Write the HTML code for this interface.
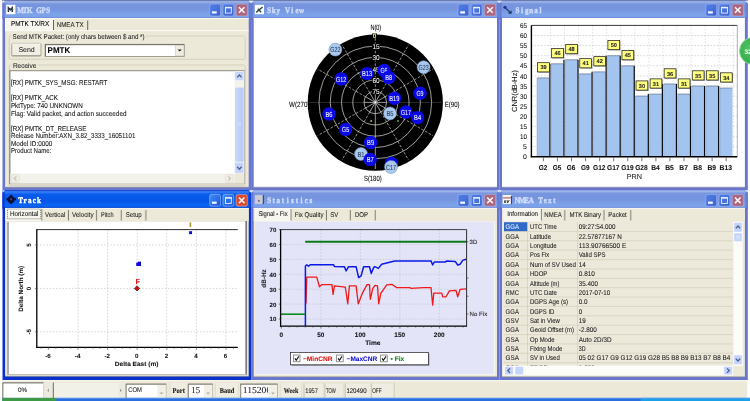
<!DOCTYPE html>
<html lang="en"><head><meta charset="utf-8"><title>GPS Tool</title>
<style>
html,body{margin:0;padding:0;background:#fff;}
body{width:750px;height:401px;overflow:hidden;font-family:"Liberation Sans",sans-serif;}
svg text{white-space:pre;}
</style></head><body>
<svg width="750" height="401" viewBox="0 0 750 401" style="display:block" text-rendering="geometricPrecision"><defs>
<linearGradient id="ti" x1="0" y1="0" x2="0" y2="1">
<stop offset="0" stop-color="#8ea6e0"/><stop offset="0.07" stop-color="#9db4e6"/><stop offset="0.18" stop-color="#7895df"/><stop offset="0.5" stop-color="#7694df"/><stop offset="0.8" stop-color="#7ca3ea"/><stop offset="0.94" stop-color="#7ba0e8"/><stop offset="1" stop-color="#6c82d2"/>
</linearGradient>
<linearGradient id="ta" x1="0" y1="0" x2="0" y2="1">
<stop offset="0" stop-color="#0a3cc8"/><stop offset="0.09" stop-color="#3d83fa"/><stop offset="0.22" stop-color="#0a5cec"/><stop offset="0.6" stop-color="#0556e6"/><stop offset="0.85" stop-color="#0a64f4"/><stop offset="0.95" stop-color="#0a5cec"/><stop offset="1" stop-color="#0030b8"/>
</linearGradient>
<linearGradient id="bi" x1="0" y1="0" x2="1" y2="1">
<stop offset="0" stop-color="#5580e6"/><stop offset="1" stop-color="#3a62d2"/>
</linearGradient>
<linearGradient id="ba" x1="0" y1="0" x2="1" y2="1">
<stop offset="0" stop-color="#3f8cf8"/><stop offset="1" stop-color="#1a55d8"/>
</linearGradient>
<linearGradient id="sbv" x1="0" y1="0" x2="1" y2="0">
<stop offset="0" stop-color="#c9d7fc"/><stop offset="1" stop-color="#b4c8f8"/>
</linearGradient>
<radialGradient id="grn" cx="0.4" cy="0.4" r="0.7">
<stop offset="0" stop-color="#52c462"/><stop offset="1" stop-color="#2fa548"/>
</radialGradient>
</defs><filter id="soft" x="0" y="0" width="750" height="401" filterUnits="userSpaceOnUse" color-interpolation-filters="sRGB"><feGaussianBlur stdDeviation="0.34"/></filter><rect x="0" y="0" width="750" height="401" fill="#fff"/><g filter="url(#soft)"><rect x="0.00" y="0.00" width="750.00" height="401.00" fill="#ffffff" />
<rect x="2.20" y="0.00" width="745.60" height="1.20" fill="#5f709c" />
<rect x="2.50" y="0.80" width="248.60" height="189.40" fill="#6876d0" />
<rect x="2.50" y="0.80" width="248.60" height="17.20" fill="url(#ti)" />
<rect x="2.50" y="2.40" width="2.20" height="17.20" fill="#6272cc" opacity="0.75"/>
<rect x="248.90" y="2.40" width="2.20" height="17.20" fill="#6272cc" opacity="0.75"/>
<rect x="5.10" y="18.00" width="243.60" height="169.50" fill="#ece9d8" />
<line x1="5.10" y1="18.50" x2="248.70" y2="18.50" stroke="#fbfaf6" stroke-width="0.9" />
<line x1="5.10" y1="187.30" x2="248.70" y2="187.30" stroke="#5d6188" stroke-width="0.6" />
<text x="24.40 29.93 35.45 40.98 46.50 52.02 57.55" y="13.20" transform="scale(0.84 1)" font-family='"Liberation Serif", serif' font-size="8.4" font-weight="bold" fill="#d6e3fb" stroke="#d6e3fb" stroke-width="0.4" text-anchor="middle" opacity="0.92">MTK GPS</text>
<path d="M2.50 0.80 h2.4 l-2.4 2.6 Z" fill="#f6f6fa" opacity="0.95"/>
<path d="M251.10 0.80 h-2.4 l2.4 2.6 Z" fill="#f6f6fa" opacity="0.95"/>
<rect x="236.10" y="4.10" width="11.20" height="11.80" fill="#ad6680" stroke="#c9d6f6" stroke-width="0.5" rx="1.6" stroke-opacity="0.7"/>
<path d="M238.90 7.20 L244.50 12.80 M244.50 7.20 L238.90 12.80" stroke="#fff" stroke-width="1.5" fill="none" opacity="0.95"/>
<rect x="222.90" y="4.10" width="10.80" height="11.80" fill="url(#bi)" stroke="#c9d6f6" stroke-width="0.5" rx="1.6" stroke-opacity="0.7"/>
<rect x="225.50" y="7.30" width="5.80" height="5.80" fill="none" stroke="#eaf1ff" stroke-width="0.9" />
<line x1="225.10" y1="7.70" x2="231.70" y2="7.70" stroke="#eaf1ff" stroke-width="1.3" />
<rect x="209.70" y="4.10" width="10.80" height="11.80" fill="url(#bi)" stroke="#c9d6f6" stroke-width="0.5" rx="1.6" stroke-opacity="0.7"/>
<rect x="211.90" y="11.30" width="4.80" height="2.20" fill="#f4f8ff" />
<rect x="6.20" y="4.80" width="9.20" height="9.40" fill="#ffffff" />
<path d="M8.40 12.00 V7.80 L10.40 9.80 L12.20 7.80 V12.00" stroke="#2b3448" stroke-width="1.5" fill="none"/>
<rect x="12.80" y="8.60" width="1.60" height="1.60" fill="#c8d86a" />
<rect x="5.50" y="19.20" width="48.40" height="12.00" fill="#f7f6ef" />
<line x1="5.50" y1="19.40" x2="5.50" y2="31.00" stroke="#ffffff" stroke-width="1" />
<text x="10.90" y="26.46" font-family='"Liberation Sans", sans-serif' font-size="7.1" fill="#000" textLength="38.40" lengthAdjust="spacingAndGlyphs" stroke="#000" stroke-width="0.07" >PMTK TX/RX</text>
<line x1="53.50" y1="20.00" x2="53.50" y2="30.00" stroke="#55524a" stroke-width="0.9" />
<text x="56.80" y="26.96" font-family='"Liberation Sans", sans-serif' font-size="7.1" fill="#222" textLength="26.80" lengthAdjust="spacingAndGlyphs" stroke="#222" stroke-width="0.07" >NMEA TX</text>
<line x1="87.70" y1="20.60" x2="87.70" y2="30.00" stroke="#55524a" stroke-width="0.9" />
<line x1="5.10" y1="30.60" x2="248.70" y2="30.60" stroke="#fbfaf4" stroke-width="1" />
<rect x="9.20" y="36.00" width="236.10" height="23.30" fill="none" stroke="#cfcbb6" stroke-width="0.8" rx="1.5" />
<rect x="11.80" y="33.00" width="134.00" height="6.00" fill="#ece9d8" />
<text x="12.60" y="38.52" font-family='"Liberation Sans", sans-serif' font-size="7.0" fill="#1c1c1c" textLength="132.00" lengthAdjust="spacingAndGlyphs" stroke="#1c1c1c" stroke-width="0.07" >Send MTK Packet: (only chars between $ and *)</text>
<rect x="11.70" y="43.40" width="29.30" height="12.60" fill="#f1efe4" stroke="#8a8778" stroke-width="0.7" rx="1" />
<line x1="12.20" y1="43.90" x2="40.60" y2="43.90" stroke="#ffffff" stroke-width="0.8" />
<line x1="12.20" y1="55.60" x2="40.90" y2="55.60" stroke="#9c998a" stroke-width="0.8" />
<text x="26.60" y="52.12" font-family='"Liberation Sans", sans-serif' font-size="7.0" fill="#222" text-anchor="middle" stroke="#222" stroke-width="0.07" >Send</text>
<rect x="45.10" y="44.30" width="139.20" height="12.20" fill="#ffffff" stroke="#8d8a7c" stroke-width="0.8" />
<line x1="45.40" y1="44.70" x2="184.00" y2="44.70" stroke="#5c5a52" stroke-width="0.8" />
<line x1="45.50" y1="44.60" x2="45.50" y2="56.20" stroke="#5c5a52" stroke-width="0.8" />
<text x="47.60" y="53.22" font-family='"Liberation Sans", sans-serif' font-size="8.4" fill="#000" font-weight="bold" textLength="22.60" lengthAdjust="spacingAndGlyphs" stroke="#000" stroke-width="0.07" >PMTK</text>
<rect x="175.20" y="45.40" width="8.60" height="10.40" fill="#efede2" stroke="#c9c6b6" stroke-width="0.5" />
<path d="M177.6 49.4 H181.8 L179.7 51.6 Z" fill="#111"/>
<rect x="9.20" y="65.00" width="236.10" height="120.60" fill="none" stroke="#cfcbb6" stroke-width="0.8" rx="1.5" />
<rect x="11.80" y="62.00" width="26.00" height="6.00" fill="#ece9d8" />
<text x="12.90" y="67.52" font-family='"Liberation Sans", sans-serif' font-size="7.0" fill="#1c1c1c" textLength="23.40" lengthAdjust="spacingAndGlyphs" stroke="#1c1c1c" stroke-width="0.07" >Receive</text>
<rect x="9.60" y="70.40" width="234.60" height="113.40" fill="#ffffff" stroke="#a5a294" stroke-width="0.8" />
<line x1="9.60" y1="70.80" x2="244.00" y2="70.80" stroke="#8a877c" stroke-width="0.7" />
<line x1="10.00" y1="70.60" x2="10.00" y2="183.60" stroke="#77746a" stroke-width="0.8" />
<text x="10.90" y="85.16" font-family='"Liberation Sans", sans-serif' font-size="7.1" fill="#111" textLength="96.50" lengthAdjust="spacingAndGlyphs" stroke="#111" stroke-width="0.07" >[RX] PMTK_SYS_MSG: RESTART</text>
<text x="10.90" y="100.34" font-family='"Liberation Sans", sans-serif' font-size="7.1" fill="#111" textLength="47.00" lengthAdjust="spacingAndGlyphs" stroke="#111" stroke-width="0.07" >[RX] PMTK_ACK</text>
<text x="10.90" y="107.93" font-family='"Liberation Sans", sans-serif' font-size="7.1" fill="#111" textLength="72.00" lengthAdjust="spacingAndGlyphs" stroke="#111" stroke-width="0.07" >PktType: 740 UNKNOWN</text>
<text x="10.90" y="115.52" font-family='"Liberation Sans", sans-serif' font-size="7.1" fill="#111" textLength="115.60" lengthAdjust="spacingAndGlyphs" stroke="#111" stroke-width="0.07" >Flag: Valid packet, and action succeeded</text>
<text x="10.90" y="130.70" font-family='"Liberation Sans", sans-serif' font-size="7.1" fill="#111" textLength="75.50" lengthAdjust="spacingAndGlyphs" stroke="#111" stroke-width="0.07" >[RX] PMTK_DT_RELEASE</text>
<text x="10.90" y="138.29" font-family='"Liberation Sans", sans-serif' font-size="7.1" fill="#111" textLength="124.50" lengthAdjust="spacingAndGlyphs" stroke="#111" stroke-width="0.07" >Release Number:AXN_3.82_3333_16051101</text>
<text x="10.90" y="145.88" font-family='"Liberation Sans", sans-serif' font-size="7.1" fill="#111" textLength="41.50" lengthAdjust="spacingAndGlyphs" stroke="#111" stroke-width="0.07" >Model ID:0000</text>
<text x="10.90" y="153.47" font-family='"Liberation Sans", sans-serif' font-size="7.1" fill="#111" textLength="40.50" lengthAdjust="spacingAndGlyphs" stroke="#111" stroke-width="0.07" >Product Name:</text>
<rect x="234.50" y="71.20" width="9.40" height="102.60" fill="#f4f3ec" />
<rect x="234.90" y="71.40" width="8.80" height="9.00" fill="#c6d5fd" stroke="#fff" stroke-width="0.4" rx="1" />
<path d="M237.2 77.4 L239.4 75 L241.6 77.4" stroke="#4d6185" stroke-width="1.3" fill="none"/>
<rect x="235.00" y="87.60" width="8.60" height="74.20" fill="url(#sbv)" rx="1" />
<line x1="237.40" y1="123.00" x2="241.40" y2="123.00" stroke="#e8eeff" stroke-width="0.6" />
<line x1="237.40" y1="125.00" x2="241.40" y2="125.00" stroke="#e8eeff" stroke-width="0.6" />
<rect x="234.90" y="162.40" width="8.80" height="10.80" fill="#c2d2fc" stroke="#fff" stroke-width="0.4" rx="1" />
<path d="M237.2 166.8 L239.4 169.2 L241.6 166.8" stroke="#4d6185" stroke-width="1.3" fill="none"/>
<rect x="10.40" y="173.60" width="224.00" height="9.80" fill="#f3f2ea" />
<rect x="234.40" y="173.60" width="9.60" height="9.80" fill="#ece9d8" />
<rect x="11.60" y="174.40" width="7.60" height="8.40" fill="#f0eee4" stroke="#dad7c8" stroke-width="0.5" rx="1" />
<path d="M16.4 176.4 L14.2 178.6 L16.4 180.8" stroke="#c4c1b2" stroke-width="1.1" fill="none"/>
<rect x="225.40" y="174.40" width="7.60" height="8.40" fill="#f0eee4" stroke="#dad7c8" stroke-width="0.5" rx="1" />
<path d="M228.2 176.4 L230.4 178.6 L228.2 180.8" stroke="#c4c1b2" stroke-width="1.1" fill="none"/>
<rect x="251.10" y="0.80" width="248.30" height="189.40" fill="#6876d0" />
<rect x="251.10" y="0.80" width="248.30" height="17.20" fill="url(#ti)" />
<rect x="251.10" y="2.40" width="2.20" height="17.20" fill="#6272cc" opacity="0.75"/>
<rect x="497.20" y="2.40" width="2.20" height="17.20" fill="#6272cc" opacity="0.75"/>
<rect x="253.70" y="18.00" width="243.30" height="169.50" fill="#ffffff" />
<line x1="253.70" y1="18.50" x2="497.00" y2="18.50" stroke="#fbfaf6" stroke-width="0.9" />
<line x1="253.70" y1="187.30" x2="497.00" y2="187.30" stroke="#5d6188" stroke-width="0.6" />
<text x="320.36 325.88 331.40 336.93 342.45 347.98 353.50 359.02" y="13.20" transform="scale(0.84 1)" font-family='"Liberation Serif", serif' font-size="8.4" font-weight="bold" fill="#d6e3fb" stroke="#d6e3fb" stroke-width="0.4" text-anchor="middle" opacity="0.92">Sky View</text>
<path d="M251.10 0.80 h2.4 l-2.4 2.6 Z" fill="#f6f6fa" opacity="0.95"/>
<path d="M499.40 0.80 h-2.4 l2.4 2.6 Z" fill="#f6f6fa" opacity="0.95"/>
<rect x="484.40" y="4.10" width="11.20" height="11.80" fill="#ad6680" stroke="#c9d6f6" stroke-width="0.5" rx="1.6" stroke-opacity="0.7"/>
<path d="M487.20 7.20 L492.80 12.80 M492.80 7.20 L487.20 12.80" stroke="#fff" stroke-width="1.5" fill="none" opacity="0.95"/>
<rect x="471.20" y="4.10" width="10.80" height="11.80" fill="url(#bi)" stroke="#c9d6f6" stroke-width="0.5" rx="1.6" stroke-opacity="0.7"/>
<rect x="473.80" y="7.30" width="5.80" height="5.80" fill="none" stroke="#eaf1ff" stroke-width="0.9" />
<line x1="473.40" y1="7.70" x2="480.00" y2="7.70" stroke="#eaf1ff" stroke-width="1.3" />
<rect x="458.00" y="4.10" width="10.80" height="11.80" fill="url(#bi)" stroke="#c9d6f6" stroke-width="0.5" rx="1.6" stroke-opacity="0.7"/>
<rect x="460.20" y="11.30" width="4.80" height="2.20" fill="#f4f8ff" />
<rect x="254.80" y="4.80" width="9.20" height="9.40" fill="#ffffff" />
<path d="M256.20 12.40 L262.60 7.00 M257.80 8.80 L261.20 12.20" stroke="#2e4a3c" stroke-width="1.4" fill="none"/>
<ellipse cx="375.3" cy="102.60000000000001" rx="67.6" ry="68.1" fill="#000"/>
<circle cx="375.3" cy="102.4" r="56.33" fill="none" stroke="#e8e8e0" stroke-width="0.75" stroke-opacity="0.9"/>
<circle cx="375.3" cy="102.4" r="45.07" fill="none" stroke="#e8e8e0" stroke-width="0.75" stroke-opacity="0.9"/>
<circle cx="375.3" cy="102.4" r="33.80" fill="none" stroke="#e8e8e0" stroke-width="0.75" stroke-opacity="0.9"/>
<circle cx="375.3" cy="102.4" r="22.53" fill="none" stroke="#e8e8e0" stroke-width="0.75" stroke-opacity="0.9"/>
<circle cx="375.3" cy="102.4" r="11.27" fill="none" stroke="#e8e8e0" stroke-width="0.75" stroke-opacity="0.9"/>
<line x1="375.30" y1="91.13" x2="375.30" y2="35.80" stroke="#e6e6de" stroke-width="0.7" stroke-dasharray="2.6 1.6" stroke-opacity="0.9"/>
<line x1="375.30" y1="102.40" x2="375.30" y2="91.13" stroke="#ffffff" stroke-width="0.6" />
<line x1="380.93" y1="92.64" x2="408.60" y2="44.72" stroke="#e6e6de" stroke-width="0.7" stroke-dasharray="2.6 1.6" stroke-opacity="0.9"/>
<line x1="375.30" y1="102.40" x2="380.93" y2="92.64" stroke="#ffffff" stroke-width="0.6" />
<line x1="385.06" y1="96.77" x2="432.98" y2="69.10" stroke="#e6e6de" stroke-width="0.7" stroke-dasharray="2.6 1.6" stroke-opacity="0.9"/>
<line x1="375.30" y1="102.40" x2="385.06" y2="96.77" stroke="#ffffff" stroke-width="0.6" />
<line x1="386.57" y1="102.40" x2="441.90" y2="102.40" stroke="#d6d6cc" stroke-width="0.5" stroke-opacity="0.4"/>
<line x1="375.30" y1="102.40" x2="386.57" y2="102.40" stroke="#ffffff" stroke-width="0.6" />
<line x1="385.06" y1="108.03" x2="432.98" y2="135.70" stroke="#e6e6de" stroke-width="0.7" stroke-dasharray="2.6 1.6" stroke-opacity="0.9"/>
<line x1="375.30" y1="102.40" x2="385.06" y2="108.03" stroke="#ffffff" stroke-width="0.6" />
<line x1="380.93" y1="112.16" x2="408.60" y2="160.08" stroke="#e6e6de" stroke-width="0.7" stroke-dasharray="2.6 1.6" stroke-opacity="0.9"/>
<line x1="375.30" y1="102.40" x2="380.93" y2="112.16" stroke="#ffffff" stroke-width="0.6" />
<line x1="375.30" y1="113.67" x2="375.30" y2="169.00" stroke="#f0f0ea" stroke-width="0.7" stroke-opacity="0.9"/>
<line x1="375.30" y1="102.40" x2="375.30" y2="113.67" stroke="#ffffff" stroke-width="0.6" />
<line x1="369.67" y1="112.16" x2="342.00" y2="160.08" stroke="#e6e6de" stroke-width="0.7" stroke-dasharray="2.6 1.6" stroke-opacity="0.9"/>
<line x1="375.30" y1="102.40" x2="369.67" y2="112.16" stroke="#ffffff" stroke-width="0.6" />
<line x1="365.54" y1="108.03" x2="317.62" y2="135.70" stroke="#e6e6de" stroke-width="0.7" stroke-dasharray="2.6 1.6" stroke-opacity="0.9"/>
<line x1="375.30" y1="102.40" x2="365.54" y2="108.03" stroke="#ffffff" stroke-width="0.6" />
<line x1="364.03" y1="102.40" x2="308.70" y2="102.40" stroke="#d6d6cc" stroke-width="0.5" stroke-opacity="0.4"/>
<line x1="375.30" y1="102.40" x2="364.03" y2="102.40" stroke="#ffffff" stroke-width="0.6" />
<line x1="365.54" y1="96.77" x2="317.62" y2="69.10" stroke="#e6e6de" stroke-width="0.7" stroke-dasharray="2.6 1.6" stroke-opacity="0.9"/>
<line x1="375.30" y1="102.40" x2="365.54" y2="96.77" stroke="#ffffff" stroke-width="0.6" />
<line x1="369.67" y1="92.64" x2="342.00" y2="44.72" stroke="#e6e6de" stroke-width="0.7" stroke-dasharray="2.6 1.6" stroke-opacity="0.9"/>
<line x1="375.30" y1="102.40" x2="369.67" y2="92.64" stroke="#ffffff" stroke-width="0.6" />
<rect x="372.30" y="33.40" width="4.60" height="4.40" fill="#000" />
<text x="374.50" y="37.90" font-family='"Liberation Sans", sans-serif' font-size="6.4" fill="#dde45a" text-anchor="middle" font-weight="bold" stroke="#dde45a" stroke-width="0.07" >0</text>
<rect x="371.90" y="43.57" width="8.20" height="5.80" fill="#000" />
<text x="376.10" y="48.99" font-family='"Liberation Sans", sans-serif' font-size="7.0" fill="#f4f4f4" text-anchor="middle" textLength="7.20" lengthAdjust="spacingAndGlyphs" stroke="#f4f4f4" stroke-width="0.07" >15</text>
<rect x="371.90" y="54.83" width="8.20" height="5.80" fill="#000" />
<text x="376.10" y="60.25" font-family='"Liberation Sans", sans-serif' font-size="7.0" fill="#f4f4f4" text-anchor="middle" textLength="7.20" lengthAdjust="spacingAndGlyphs" stroke="#f4f4f4" stroke-width="0.07" >30</text>
<rect x="371.90" y="66.10" width="8.20" height="5.80" fill="#000" />
<text x="376.10" y="71.52" font-family='"Liberation Sans", sans-serif' font-size="7.0" fill="#f4f4f4" text-anchor="middle" textLength="7.20" lengthAdjust="spacingAndGlyphs" stroke="#f4f4f4" stroke-width="0.07" >45</text>
<rect x="371.90" y="77.37" width="8.20" height="5.80" fill="#000" />
<text x="376.10" y="82.79" font-family='"Liberation Sans", sans-serif' font-size="7.0" fill="#f4f4f4" text-anchor="middle" textLength="7.20" lengthAdjust="spacingAndGlyphs" stroke="#f4f4f4" stroke-width="0.07" >60</text>
<rect x="371.90" y="88.63" width="8.20" height="5.80" fill="#000" />
<text x="376.10" y="94.05" font-family='"Liberation Sans", sans-serif' font-size="7.0" fill="#f4f4f4" text-anchor="middle" textLength="7.20" lengthAdjust="spacingAndGlyphs" stroke="#f4f4f4" stroke-width="0.07" >75</text>
<text x="375.80" y="29.54" font-family='"Liberation Sans", sans-serif' font-size="7.6" fill="#000" text-anchor="middle" textLength="10.80" lengthAdjust="spacingAndGlyphs" stroke="#000" stroke-width="0.07" >N(0)</text>
<text x="372.80" y="180.94" font-family='"Liberation Sans", sans-serif' font-size="7.6" fill="#000" text-anchor="middle" textLength="17.60" lengthAdjust="spacingAndGlyphs" stroke="#000" stroke-width="0.07" >S(180)</text>
<text x="289.00" y="106.74" font-family='"Liberation Sans", sans-serif' font-size="7.6" fill="#000" textLength="20.60" lengthAdjust="spacingAndGlyphs" stroke="#000" stroke-width="0.07" >W(270)</text>
<text x="444.80" y="106.74" font-family='"Liberation Sans", sans-serif' font-size="7.6" fill="#000" textLength="14.70" lengthAdjust="spacingAndGlyphs" stroke="#000" stroke-width="0.07" >E(90)</text>
<circle cx="371.2" cy="121" r="0.9" fill="#a8c040"/>
<circle cx="398" cy="121" r="0.9" fill="#58b848"/>
<circle cx="335.4" cy="49.6" r="6.5" fill="#a9c9ee" stroke="#6f8db8" stroke-width="0.5"/>
<text x="335.40" y="52.33" font-family='"Liberation Sans", sans-serif' font-size="7.3" fill="#2c3e5c" text-anchor="middle" textLength="10.20" lengthAdjust="spacingAndGlyphs" stroke="#2c3e5c" stroke-width="0.07" >G22</text>
<circle cx="423.6" cy="67.2" r="6.5" fill="#a9c9ee" stroke="#6f8db8" stroke-width="0.5"/>
<text x="423.60" y="69.93" font-family='"Liberation Sans", sans-serif' font-size="7.3" fill="#2c3e5c" text-anchor="middle" textLength="10.20" lengthAdjust="spacingAndGlyphs" stroke="#2c3e5c" stroke-width="0.07" >G23</text>
<circle cx="341.2" cy="79.0" r="6.7" fill="#0a0ae6"/>
<text x="341.20" y="81.73" font-family='"Liberation Sans", sans-serif' font-size="7.3" fill="#f4f6ff" text-anchor="middle" textLength="10.20" lengthAdjust="spacingAndGlyphs" stroke="#f4f6ff" stroke-width="0.07" >G12</text>
<circle cx="367.0" cy="73.6" r="6.7" fill="#0a0ae6"/>
<text x="367.00" y="76.33" font-family='"Liberation Sans", sans-serif' font-size="7.3" fill="#f4f6ff" text-anchor="middle" textLength="10.20" lengthAdjust="spacingAndGlyphs" stroke="#f4f6ff" stroke-width="0.07" >B13</text>
<circle cx="384.0" cy="70.4" r="6.7" fill="#0a0ae6"/>
<text x="384.00" y="73.13" font-family='"Liberation Sans", sans-serif' font-size="7.3" fill="#f4f6ff" text-anchor="middle" textLength="7.00" lengthAdjust="spacingAndGlyphs" stroke="#f4f6ff" stroke-width="0.07" >G6</text>
<circle cx="388.8" cy="77.4" r="6.7" fill="#0a0ae6"/>
<text x="388.80" y="80.13" font-family='"Liberation Sans", sans-serif' font-size="7.3" fill="#f4f6ff" text-anchor="middle" textLength="7.00" lengthAdjust="spacingAndGlyphs" stroke="#f4f6ff" stroke-width="0.07" >B8</text>
<circle cx="420.0" cy="93.2" r="6.7" fill="#0a0ae6"/>
<text x="420.00" y="95.93" font-family='"Liberation Sans", sans-serif' font-size="7.3" fill="#f4f6ff" text-anchor="middle" textLength="7.00" lengthAdjust="spacingAndGlyphs" stroke="#f4f6ff" stroke-width="0.07" >G9</text>
<circle cx="394.4" cy="98.2" r="6.7" fill="#0a0ae6"/>
<text x="394.40" y="100.93" font-family='"Liberation Sans", sans-serif' font-size="7.3" fill="#f4f6ff" text-anchor="middle" textLength="10.20" lengthAdjust="spacingAndGlyphs" stroke="#f4f6ff" stroke-width="0.07" >B19</text>
<circle cx="329.0" cy="114.0" r="6.7" fill="#0a0ae6"/>
<text x="329.00" y="116.73" font-family='"Liberation Sans", sans-serif' font-size="7.3" fill="#f4f6ff" text-anchor="middle" textLength="7.00" lengthAdjust="spacingAndGlyphs" stroke="#f4f6ff" stroke-width="0.07" >B6</text>
<circle cx="345.6" cy="129.4" r="6.7" fill="#0a0ae6"/>
<text x="345.60" y="132.13" font-family='"Liberation Sans", sans-serif' font-size="7.3" fill="#f4f6ff" text-anchor="middle" textLength="7.00" lengthAdjust="spacingAndGlyphs" stroke="#f4f6ff" stroke-width="0.07" >G5</text>
<circle cx="406.0" cy="112.0" r="6.7" fill="#0a0ae6"/>
<text x="406.00" y="114.73" font-family='"Liberation Sans", sans-serif' font-size="7.3" fill="#f4f6ff" text-anchor="middle" textLength="10.20" lengthAdjust="spacingAndGlyphs" stroke="#f4f6ff" stroke-width="0.07" >G17</text>
<circle cx="417.6" cy="117.6" r="6.7" fill="#0a0ae6"/>
<text x="417.60" y="120.33" font-family='"Liberation Sans", sans-serif' font-size="7.3" fill="#f4f6ff" text-anchor="middle" textLength="7.00" lengthAdjust="spacingAndGlyphs" stroke="#f4f6ff" stroke-width="0.07" >B4</text>
<circle cx="390.0" cy="113.4" r="6.5" fill="#a9c9ee" stroke="#6f8db8" stroke-width="0.5"/>
<text x="390.00" y="116.13" font-family='"Liberation Sans", sans-serif' font-size="7.3" fill="#2c3e5c" text-anchor="middle" textLength="7.00" lengthAdjust="spacingAndGlyphs" stroke="#2c3e5c" stroke-width="0.07" >B5</text>
<circle cx="370.6" cy="142.6" r="6.7" fill="#0a0ae6"/>
<text x="370.60" y="145.33" font-family='"Liberation Sans", sans-serif' font-size="7.3" fill="#f4f6ff" text-anchor="middle" textLength="7.00" lengthAdjust="spacingAndGlyphs" stroke="#f4f6ff" stroke-width="0.07" >B9</text>
<circle cx="361.0" cy="154.0" r="6.5" fill="#a9c9ee" stroke="#6f8db8" stroke-width="0.5"/>
<text x="361.00" y="156.73" font-family='"Liberation Sans", sans-serif' font-size="7.3" fill="#2c3e5c" text-anchor="middle" textLength="7.00" lengthAdjust="spacingAndGlyphs" stroke="#2c3e5c" stroke-width="0.07" >B1</text>
<circle cx="370.2" cy="159.4" r="6.7" fill="#0a0ae6"/>
<text x="370.20" y="162.13" font-family='"Liberation Sans", sans-serif' font-size="7.3" fill="#f4f6ff" text-anchor="middle" textLength="7.00" lengthAdjust="spacingAndGlyphs" stroke="#f4f6ff" stroke-width="0.07" >B7</text>
<circle cx="391.4" cy="163.4" r="6.7" fill="#0a0ae6"/>
<text x="391.40" y="166.13" font-family='"Liberation Sans", sans-serif' font-size="7.3" fill="#f4f6ff" text-anchor="middle" textLength="7.00" lengthAdjust="spacingAndGlyphs" stroke="#f4f6ff" stroke-width="0.07" >G2</text>
<circle cx="391.0" cy="167.0" r="6.5" fill="#a9c9ee" stroke="#6f8db8" stroke-width="0.5"/>
<text x="391.00" y="169.73" font-family='"Liberation Sans", sans-serif' font-size="7.3" fill="#2c3e5c" text-anchor="middle" textLength="10.20" lengthAdjust="spacingAndGlyphs" stroke="#2c3e5c" stroke-width="0.07" >C17</text>
<rect x="499.40" y="0.80" width="248.40" height="189.40" fill="#6876d0" />
<rect x="499.40" y="0.80" width="248.40" height="17.20" fill="url(#ti)" />
<rect x="499.40" y="2.40" width="2.20" height="17.20" fill="#6272cc" opacity="0.75"/>
<rect x="745.60" y="2.40" width="2.20" height="17.20" fill="#6272cc" opacity="0.75"/>
<rect x="502.00" y="18.00" width="242.90" height="169.50" fill="#ffffff" />
<line x1="502.00" y1="18.50" x2="744.90" y2="18.50" stroke="#fbfaf6" stroke-width="0.9" />
<line x1="502.00" y1="187.30" x2="744.90" y2="187.30" stroke="#5d6188" stroke-width="0.6" />
<text x="615.95 621.48 627.00 632.52 638.05 643.57" y="13.20" transform="scale(0.84 1)" font-family='"Liberation Serif", serif' font-size="8.4" font-weight="bold" fill="#d6e3fb" stroke="#d6e3fb" stroke-width="0.4" text-anchor="middle" opacity="0.92">Signal</text>
<path d="M499.40 0.80 h2.4 l-2.4 2.6 Z" fill="#f6f6fa" opacity="0.95"/>
<path d="M747.80 0.80 h-2.4 l2.4 2.6 Z" fill="#f6f6fa" opacity="0.95"/>
<rect x="732.20" y="4.10" width="11.20" height="11.80" fill="#ad6680" stroke="#c9d6f6" stroke-width="0.5" rx="1.6" stroke-opacity="0.7"/>
<path d="M735.00 7.20 L740.60 12.80 M740.60 7.20 L735.00 12.80" stroke="#fff" stroke-width="1.5" fill="none" opacity="0.95"/>
<rect x="719.00" y="4.10" width="10.80" height="11.80" fill="url(#bi)" stroke="#c9d6f6" stroke-width="0.5" rx="1.6" stroke-opacity="0.7"/>
<rect x="721.60" y="7.30" width="5.80" height="5.80" fill="none" stroke="#eaf1ff" stroke-width="0.9" />
<line x1="721.20" y1="7.70" x2="727.80" y2="7.70" stroke="#eaf1ff" stroke-width="1.3" />
<rect x="705.80" y="4.10" width="10.80" height="11.80" fill="url(#bi)" stroke="#c9d6f6" stroke-width="0.5" rx="1.6" stroke-opacity="0.7"/>
<rect x="708.00" y="11.30" width="4.80" height="2.20" fill="#f4f8ff" />
<circle cx="504.90" cy="7.20" r="1.5" fill="#2a2f9a"/>
<path d="M505.30 7.60 L510.70 13.00 M508.50 13.20 H511.10 V10.80" stroke="#1f3a6a" stroke-width="1.2" fill="none"/>
<line x1="531.40" y1="146.60" x2="737.30" y2="146.60" stroke="#c8c8c8" stroke-width="0.7" stroke-dasharray="1.6 1.6" />
<line x1="531.40" y1="136.50" x2="737.30" y2="136.50" stroke="#c8c8c8" stroke-width="0.7" stroke-dasharray="1.6 1.6" />
<line x1="531.40" y1="126.40" x2="737.30" y2="126.40" stroke="#c8c8c8" stroke-width="0.7" stroke-dasharray="1.6 1.6" />
<line x1="531.40" y1="116.30" x2="737.30" y2="116.30" stroke="#c8c8c8" stroke-width="0.7" stroke-dasharray="1.6 1.6" />
<line x1="531.40" y1="106.20" x2="737.30" y2="106.20" stroke="#c8c8c8" stroke-width="0.7" stroke-dasharray="1.6 1.6" />
<line x1="531.40" y1="96.10" x2="737.30" y2="96.10" stroke="#c8c8c8" stroke-width="0.7" stroke-dasharray="1.6 1.6" />
<line x1="531.40" y1="86.00" x2="737.30" y2="86.00" stroke="#c8c8c8" stroke-width="0.7" stroke-dasharray="1.6 1.6" />
<line x1="531.40" y1="75.90" x2="737.30" y2="75.90" stroke="#c8c8c8" stroke-width="0.7" stroke-dasharray="1.6 1.6" />
<line x1="531.40" y1="65.80" x2="737.30" y2="65.80" stroke="#c8c8c8" stroke-width="0.7" stroke-dasharray="1.6 1.6" />
<line x1="531.40" y1="55.70" x2="737.30" y2="55.70" stroke="#c8c8c8" stroke-width="0.7" stroke-dasharray="1.6 1.6" />
<line x1="531.40" y1="45.60" x2="737.30" y2="45.60" stroke="#c8c8c8" stroke-width="0.7" stroke-dasharray="1.6 1.6" />
<line x1="531.40" y1="35.50" x2="737.30" y2="35.50" stroke="#c8c8c8" stroke-width="0.7" stroke-dasharray="1.6 1.6" />
<line x1="550.43" y1="25.40" x2="550.43" y2="156.70" stroke="#d4d4d4" stroke-width="0.7" stroke-dasharray="1.6 1.6" />
<line x1="564.49" y1="25.40" x2="564.49" y2="156.70" stroke="#d4d4d4" stroke-width="0.7" stroke-dasharray="1.6 1.6" />
<line x1="578.55" y1="25.40" x2="578.55" y2="156.70" stroke="#d4d4d4" stroke-width="0.7" stroke-dasharray="1.6 1.6" />
<line x1="592.61" y1="25.40" x2="592.61" y2="156.70" stroke="#d4d4d4" stroke-width="0.7" stroke-dasharray="1.6 1.6" />
<line x1="606.67" y1="25.40" x2="606.67" y2="156.70" stroke="#d4d4d4" stroke-width="0.7" stroke-dasharray="1.6 1.6" />
<line x1="620.73" y1="25.40" x2="620.73" y2="156.70" stroke="#d4d4d4" stroke-width="0.7" stroke-dasharray="1.6 1.6" />
<line x1="634.79" y1="25.40" x2="634.79" y2="156.70" stroke="#d4d4d4" stroke-width="0.7" stroke-dasharray="1.6 1.6" />
<line x1="648.85" y1="25.40" x2="648.85" y2="156.70" stroke="#d4d4d4" stroke-width="0.7" stroke-dasharray="1.6 1.6" />
<line x1="662.91" y1="25.40" x2="662.91" y2="156.70" stroke="#d4d4d4" stroke-width="0.7" stroke-dasharray="1.6 1.6" />
<line x1="676.97" y1="25.40" x2="676.97" y2="156.70" stroke="#d4d4d4" stroke-width="0.7" stroke-dasharray="1.6 1.6" />
<line x1="691.03" y1="25.40" x2="691.03" y2="156.70" stroke="#d4d4d4" stroke-width="0.7" stroke-dasharray="1.6 1.6" />
<line x1="705.09" y1="25.40" x2="705.09" y2="156.70" stroke="#d4d4d4" stroke-width="0.7" stroke-dasharray="1.6 1.6" />
<line x1="719.15" y1="25.40" x2="719.15" y2="156.70" stroke="#d4d4d4" stroke-width="0.7" stroke-dasharray="1.6 1.6" />
<line x1="733.21" y1="25.40" x2="733.21" y2="156.70" stroke="#d4d4d4" stroke-width="0.7" stroke-dasharray="1.6 1.6" />
<rect x="537.10" y="77.92" width="12.60" height="78.78" fill="#a2c4ee" />
<line x1="549.90" y1="63.78" x2="549.90" y2="156.70" stroke="#05080f" stroke-width="1.2" />
<line x1="537.10" y1="77.92" x2="549.70" y2="77.92" stroke="#56627a" stroke-width="0.6" />
<line x1="537.10" y1="77.92" x2="537.10" y2="156.70" stroke="#7d8fae" stroke-width="0.5" />
<rect x="551.16" y="63.78" width="12.60" height="92.92" fill="#a2c4ee" />
<line x1="563.96" y1="59.74" x2="563.96" y2="156.70" stroke="#05080f" stroke-width="1.2" />
<line x1="551.16" y1="63.78" x2="563.76" y2="63.78" stroke="#56627a" stroke-width="0.6" />
<line x1="551.16" y1="63.78" x2="551.16" y2="156.70" stroke="#7d8fae" stroke-width="0.5" />
<rect x="565.22" y="59.74" width="12.60" height="96.96" fill="#a2c4ee" />
<line x1="578.02" y1="59.74" x2="578.02" y2="156.70" stroke="#05080f" stroke-width="1.2" />
<line x1="565.22" y1="59.74" x2="577.82" y2="59.74" stroke="#56627a" stroke-width="0.6" />
<line x1="565.22" y1="59.74" x2="565.22" y2="156.70" stroke="#7d8fae" stroke-width="0.5" />
<rect x="579.28" y="73.88" width="12.60" height="82.82" fill="#a2c4ee" />
<line x1="592.08" y1="71.86" x2="592.08" y2="156.70" stroke="#05080f" stroke-width="1.2" />
<line x1="579.28" y1="73.88" x2="591.88" y2="73.88" stroke="#56627a" stroke-width="0.6" />
<line x1="579.28" y1="73.88" x2="579.28" y2="156.70" stroke="#7d8fae" stroke-width="0.5" />
<rect x="593.34" y="71.86" width="12.60" height="84.84" fill="#a2c4ee" />
<line x1="606.14" y1="55.70" x2="606.14" y2="156.70" stroke="#05080f" stroke-width="1.2" />
<line x1="593.34" y1="71.86" x2="605.94" y2="71.86" stroke="#56627a" stroke-width="0.6" />
<line x1="593.34" y1="71.86" x2="593.34" y2="156.70" stroke="#7d8fae" stroke-width="0.5" />
<rect x="607.40" y="55.70" width="12.60" height="101.00" fill="#a2c4ee" />
<line x1="620.20" y1="55.70" x2="620.20" y2="156.70" stroke="#05080f" stroke-width="1.2" />
<line x1="607.40" y1="55.70" x2="620.00" y2="55.70" stroke="#56627a" stroke-width="0.6" />
<line x1="607.40" y1="55.70" x2="607.40" y2="156.70" stroke="#7d8fae" stroke-width="0.5" />
<rect x="621.46" y="65.80" width="12.60" height="90.90" fill="#a2c4ee" />
<line x1="634.26" y1="65.80" x2="634.26" y2="156.70" stroke="#05080f" stroke-width="1.2" />
<line x1="621.46" y1="65.80" x2="634.06" y2="65.80" stroke="#56627a" stroke-width="0.6" />
<line x1="621.46" y1="65.80" x2="621.46" y2="156.70" stroke="#7d8fae" stroke-width="0.5" />
<rect x="635.52" y="96.10" width="12.60" height="60.60" fill="#a2c4ee" />
<line x1="648.32" y1="94.08" x2="648.32" y2="156.70" stroke="#05080f" stroke-width="1.2" />
<line x1="635.52" y1="96.10" x2="648.12" y2="96.10" stroke="#56627a" stroke-width="0.6" />
<line x1="635.52" y1="96.10" x2="635.52" y2="156.70" stroke="#7d8fae" stroke-width="0.5" />
<rect x="649.58" y="94.08" width="12.60" height="62.62" fill="#a2c4ee" />
<line x1="662.38" y1="83.98" x2="662.38" y2="156.70" stroke="#05080f" stroke-width="1.2" />
<line x1="649.58" y1="94.08" x2="662.18" y2="94.08" stroke="#56627a" stroke-width="0.6" />
<line x1="649.58" y1="94.08" x2="649.58" y2="156.70" stroke="#7d8fae" stroke-width="0.5" />
<rect x="663.64" y="83.98" width="12.60" height="72.72" fill="#a2c4ee" />
<line x1="676.44" y1="83.98" x2="676.44" y2="156.70" stroke="#05080f" stroke-width="1.2" />
<line x1="663.64" y1="83.98" x2="676.24" y2="83.98" stroke="#56627a" stroke-width="0.6" />
<line x1="663.64" y1="83.98" x2="663.64" y2="156.70" stroke="#7d8fae" stroke-width="0.5" />
<rect x="677.70" y="94.08" width="12.60" height="62.62" fill="#a2c4ee" />
<line x1="690.50" y1="86.00" x2="690.50" y2="156.70" stroke="#05080f" stroke-width="1.2" />
<line x1="677.70" y1="94.08" x2="690.30" y2="94.08" stroke="#56627a" stroke-width="0.6" />
<line x1="677.70" y1="94.08" x2="677.70" y2="156.70" stroke="#7d8fae" stroke-width="0.5" />
<rect x="691.76" y="86.00" width="12.60" height="70.70" fill="#a2c4ee" />
<line x1="704.56" y1="86.00" x2="704.56" y2="156.70" stroke="#05080f" stroke-width="1.2" />
<line x1="691.76" y1="86.00" x2="704.36" y2="86.00" stroke="#56627a" stroke-width="0.6" />
<line x1="691.76" y1="86.00" x2="691.76" y2="156.70" stroke="#7d8fae" stroke-width="0.5" />
<rect x="705.82" y="86.00" width="12.60" height="70.70" fill="#a2c4ee" />
<line x1="718.62" y1="86.00" x2="718.62" y2="156.70" stroke="#05080f" stroke-width="1.2" />
<line x1="705.82" y1="86.00" x2="718.42" y2="86.00" stroke="#56627a" stroke-width="0.6" />
<line x1="705.82" y1="86.00" x2="705.82" y2="156.70" stroke="#7d8fae" stroke-width="0.5" />
<rect x="719.88" y="88.02" width="12.60" height="68.68" fill="#a2c4ee" />
<line x1="719.88" y1="88.02" x2="732.48" y2="88.02" stroke="#56627a" stroke-width="0.6" />
<line x1="719.88" y1="88.02" x2="719.88" y2="156.70" stroke="#7d8fae" stroke-width="0.5" />
<line x1="531.40" y1="25.40" x2="737.30" y2="25.40" stroke="#222" stroke-width="0.9" />
<line x1="737.30" y1="25.40" x2="737.30" y2="156.70" stroke="#a8a8a8" stroke-width="0.9" />
<line x1="531.40" y1="25.40" x2="531.40" y2="157.30" stroke="#000" stroke-width="1.4" />
<line x1="530.80" y1="156.70" x2="737.30" y2="156.70" stroke="#000" stroke-width="1.4" />
<rect x="538.40" y="63.52" width="11.80" height="9.20" fill="#555" opacity="0.55"/>
<rect x="537.60" y="62.72" width="11.80" height="9.20" fill="#ffff80" stroke="#111" stroke-width="0.7" />
<text x="543.50" y="69.44" font-family='"Liberation Sans", sans-serif' font-size="5.6" fill="#222" text-anchor="middle" font-weight="bold" stroke="#222" stroke-width="0.07" >39</text>
<rect x="552.46" y="49.38" width="11.80" height="9.20" fill="#555" opacity="0.55"/>
<rect x="551.66" y="48.58" width="11.80" height="9.20" fill="#ffff80" stroke="#111" stroke-width="0.7" />
<text x="557.56" y="55.30" font-family='"Liberation Sans", sans-serif' font-size="5.6" fill="#222" text-anchor="middle" font-weight="bold" stroke="#222" stroke-width="0.07" >46</text>
<rect x="566.52" y="45.34" width="11.80" height="9.20" fill="#555" opacity="0.55"/>
<rect x="565.72" y="44.54" width="11.80" height="9.20" fill="#ffff80" stroke="#111" stroke-width="0.7" />
<text x="571.62" y="51.26" font-family='"Liberation Sans", sans-serif' font-size="5.6" fill="#222" text-anchor="middle" font-weight="bold" stroke="#222" stroke-width="0.07" >48</text>
<rect x="580.58" y="59.48" width="11.80" height="9.20" fill="#555" opacity="0.55"/>
<rect x="579.78" y="58.68" width="11.80" height="9.20" fill="#ffff80" stroke="#111" stroke-width="0.7" />
<text x="585.68" y="65.40" font-family='"Liberation Sans", sans-serif' font-size="5.6" fill="#222" text-anchor="middle" font-weight="bold" stroke="#222" stroke-width="0.07" >41</text>
<rect x="594.64" y="57.46" width="11.80" height="9.20" fill="#555" opacity="0.55"/>
<rect x="593.84" y="56.66" width="11.80" height="9.20" fill="#ffff80" stroke="#111" stroke-width="0.7" />
<text x="599.74" y="63.38" font-family='"Liberation Sans", sans-serif' font-size="5.6" fill="#222" text-anchor="middle" font-weight="bold" stroke="#222" stroke-width="0.07" >42</text>
<rect x="608.70" y="41.30" width="11.80" height="9.20" fill="#555" opacity="0.55"/>
<rect x="607.90" y="40.50" width="11.80" height="9.20" fill="#ffff80" stroke="#111" stroke-width="0.7" />
<text x="613.80" y="47.22" font-family='"Liberation Sans", sans-serif' font-size="5.6" fill="#222" text-anchor="middle" font-weight="bold" stroke="#222" stroke-width="0.07" >50</text>
<rect x="622.76" y="51.40" width="11.80" height="9.20" fill="#555" opacity="0.55"/>
<rect x="621.96" y="50.60" width="11.80" height="9.20" fill="#ffff80" stroke="#111" stroke-width="0.7" />
<text x="627.86" y="57.32" font-family='"Liberation Sans", sans-serif' font-size="5.6" fill="#222" text-anchor="middle" font-weight="bold" stroke="#222" stroke-width="0.07" >45</text>
<rect x="636.82" y="81.70" width="11.80" height="9.20" fill="#555" opacity="0.55"/>
<rect x="636.02" y="80.90" width="11.80" height="9.20" fill="#ffff80" stroke="#111" stroke-width="0.7" />
<text x="641.92" y="87.62" font-family='"Liberation Sans", sans-serif' font-size="5.6" fill="#222" text-anchor="middle" font-weight="bold" stroke="#222" stroke-width="0.07" >30</text>
<rect x="650.88" y="79.68" width="11.80" height="9.20" fill="#555" opacity="0.55"/>
<rect x="650.08" y="78.88" width="11.80" height="9.20" fill="#ffff80" stroke="#111" stroke-width="0.7" />
<text x="655.98" y="85.60" font-family='"Liberation Sans", sans-serif' font-size="5.6" fill="#222" text-anchor="middle" font-weight="bold" stroke="#222" stroke-width="0.07" >31</text>
<rect x="664.94" y="69.58" width="11.80" height="9.20" fill="#555" opacity="0.55"/>
<rect x="664.14" y="68.78" width="11.80" height="9.20" fill="#ffff80" stroke="#111" stroke-width="0.7" />
<text x="670.04" y="75.50" font-family='"Liberation Sans", sans-serif' font-size="5.6" fill="#222" text-anchor="middle" font-weight="bold" stroke="#222" stroke-width="0.07" >36</text>
<rect x="679.00" y="79.68" width="11.80" height="9.20" fill="#555" opacity="0.55"/>
<rect x="678.20" y="78.88" width="11.80" height="9.20" fill="#ffff80" stroke="#111" stroke-width="0.7" />
<text x="684.10" y="85.60" font-family='"Liberation Sans", sans-serif' font-size="5.6" fill="#222" text-anchor="middle" font-weight="bold" stroke="#222" stroke-width="0.07" >31</text>
<rect x="693.06" y="71.60" width="11.80" height="9.20" fill="#555" opacity="0.55"/>
<rect x="692.26" y="70.80" width="11.80" height="9.20" fill="#ffff80" stroke="#111" stroke-width="0.7" />
<text x="698.16" y="77.52" font-family='"Liberation Sans", sans-serif' font-size="5.6" fill="#222" text-anchor="middle" font-weight="bold" stroke="#222" stroke-width="0.07" >35</text>
<rect x="707.12" y="71.60" width="11.80" height="9.20" fill="#555" opacity="0.55"/>
<rect x="706.32" y="70.80" width="11.80" height="9.20" fill="#ffff80" stroke="#111" stroke-width="0.7" />
<text x="712.22" y="77.52" font-family='"Liberation Sans", sans-serif' font-size="5.6" fill="#222" text-anchor="middle" font-weight="bold" stroke="#222" stroke-width="0.07" >35</text>
<rect x="721.18" y="73.62" width="11.80" height="9.20" fill="#555" opacity="0.55"/>
<rect x="720.38" y="72.82" width="11.80" height="9.20" fill="#ffff80" stroke="#111" stroke-width="0.7" />
<text x="726.28" y="79.54" font-family='"Liberation Sans", sans-serif' font-size="5.6" fill="#222" text-anchor="middle" font-weight="bold" stroke="#222" stroke-width="0.07" >34</text>
<text x="526.90" y="159.38" font-family='"Liberation Sans", sans-serif' font-size="6.9" fill="#111" text-anchor="end" stroke="#111" stroke-width="0.07" >0</text>
<text x="526.90" y="149.28" font-family='"Liberation Sans", sans-serif' font-size="6.9" fill="#111" text-anchor="end" stroke="#111" stroke-width="0.07" >5</text>
<text x="526.90" y="139.18" font-family='"Liberation Sans", sans-serif' font-size="6.9" fill="#111" text-anchor="end" textLength="7.00" lengthAdjust="spacingAndGlyphs" stroke="#111" stroke-width="0.07" >10</text>
<text x="526.90" y="129.08" font-family='"Liberation Sans", sans-serif' font-size="6.9" fill="#111" text-anchor="end" textLength="7.00" lengthAdjust="spacingAndGlyphs" stroke="#111" stroke-width="0.07" >15</text>
<text x="526.90" y="118.98" font-family='"Liberation Sans", sans-serif' font-size="6.9" fill="#111" text-anchor="end" textLength="7.00" lengthAdjust="spacingAndGlyphs" stroke="#111" stroke-width="0.07" >20</text>
<text x="526.90" y="108.88" font-family='"Liberation Sans", sans-serif' font-size="6.9" fill="#111" text-anchor="end" textLength="7.00" lengthAdjust="spacingAndGlyphs" stroke="#111" stroke-width="0.07" >25</text>
<text x="526.90" y="98.78" font-family='"Liberation Sans", sans-serif' font-size="6.9" fill="#111" text-anchor="end" textLength="7.00" lengthAdjust="spacingAndGlyphs" stroke="#111" stroke-width="0.07" >30</text>
<text x="526.90" y="88.68" font-family='"Liberation Sans", sans-serif' font-size="6.9" fill="#111" text-anchor="end" textLength="7.00" lengthAdjust="spacingAndGlyphs" stroke="#111" stroke-width="0.07" >35</text>
<text x="526.90" y="78.58" font-family='"Liberation Sans", sans-serif' font-size="6.9" fill="#111" text-anchor="end" textLength="7.00" lengthAdjust="spacingAndGlyphs" stroke="#111" stroke-width="0.07" >40</text>
<text x="526.90" y="68.48" font-family='"Liberation Sans", sans-serif' font-size="6.9" fill="#111" text-anchor="end" textLength="7.00" lengthAdjust="spacingAndGlyphs" stroke="#111" stroke-width="0.07" >45</text>
<text x="526.90" y="58.38" font-family='"Liberation Sans", sans-serif' font-size="6.9" fill="#111" text-anchor="end" textLength="7.00" lengthAdjust="spacingAndGlyphs" stroke="#111" stroke-width="0.07" >50</text>
<text x="526.90" y="48.28" font-family='"Liberation Sans", sans-serif' font-size="6.9" fill="#111" text-anchor="end" textLength="7.00" lengthAdjust="spacingAndGlyphs" stroke="#111" stroke-width="0.07" >55</text>
<text x="526.90" y="38.18" font-family='"Liberation Sans", sans-serif' font-size="6.9" fill="#111" text-anchor="end" textLength="7.00" lengthAdjust="spacingAndGlyphs" stroke="#111" stroke-width="0.07" >60</text>
<text x="526.90" y="28.08" font-family='"Liberation Sans", sans-serif' font-size="6.9" fill="#111" text-anchor="end" textLength="7.00" lengthAdjust="spacingAndGlyphs" stroke="#111" stroke-width="0.07" >65</text>
<line x1="543.40" y1="157.30" x2="543.40" y2="161.30" stroke="#555" stroke-width="0.8" />
<text x="543.00" y="169.72" font-family='"Liberation Sans", sans-serif' font-size="7.0" fill="#111" text-anchor="middle" font-weight="bold" textLength="8.60" lengthAdjust="spacingAndGlyphs" stroke="#111" stroke-width="0.07" >G2</text>
<line x1="557.46" y1="157.30" x2="557.46" y2="161.30" stroke="#555" stroke-width="0.8" />
<text x="557.06" y="169.72" font-family='"Liberation Sans", sans-serif' font-size="7.0" fill="#111" text-anchor="middle" font-weight="bold" textLength="8.60" lengthAdjust="spacingAndGlyphs" stroke="#111" stroke-width="0.07" >G5</text>
<line x1="571.52" y1="157.30" x2="571.52" y2="161.30" stroke="#555" stroke-width="0.8" />
<text x="571.12" y="169.72" font-family='"Liberation Sans", sans-serif' font-size="7.0" fill="#111" text-anchor="middle" font-weight="bold" textLength="8.60" lengthAdjust="spacingAndGlyphs" stroke="#111" stroke-width="0.07" >G6</text>
<line x1="585.58" y1="157.30" x2="585.58" y2="161.30" stroke="#555" stroke-width="0.8" />
<text x="585.18" y="169.72" font-family='"Liberation Sans", sans-serif' font-size="7.0" fill="#111" text-anchor="middle" font-weight="bold" textLength="8.60" lengthAdjust="spacingAndGlyphs" stroke="#111" stroke-width="0.07" >G9</text>
<line x1="599.64" y1="157.30" x2="599.64" y2="161.30" stroke="#555" stroke-width="0.8" />
<text x="599.24" y="169.72" font-family='"Liberation Sans", sans-serif' font-size="7.0" fill="#111" text-anchor="middle" font-weight="bold" textLength="12.40" lengthAdjust="spacingAndGlyphs" stroke="#111" stroke-width="0.07" >G12</text>
<line x1="613.70" y1="157.30" x2="613.70" y2="161.30" stroke="#555" stroke-width="0.8" />
<text x="613.30" y="169.72" font-family='"Liberation Sans", sans-serif' font-size="7.0" fill="#111" text-anchor="middle" font-weight="bold" textLength="12.40" lengthAdjust="spacingAndGlyphs" stroke="#111" stroke-width="0.07" >G17</text>
<line x1="627.76" y1="157.30" x2="627.76" y2="161.30" stroke="#555" stroke-width="0.8" />
<text x="627.36" y="169.72" font-family='"Liberation Sans", sans-serif' font-size="7.0" fill="#111" text-anchor="middle" font-weight="bold" textLength="12.40" lengthAdjust="spacingAndGlyphs" stroke="#111" stroke-width="0.07" >G19</text>
<line x1="641.82" y1="157.30" x2="641.82" y2="161.30" stroke="#555" stroke-width="0.8" />
<text x="641.42" y="169.72" font-family='"Liberation Sans", sans-serif' font-size="7.0" fill="#111" text-anchor="middle" font-weight="bold" textLength="12.40" lengthAdjust="spacingAndGlyphs" stroke="#111" stroke-width="0.07" >G28</text>
<line x1="655.88" y1="157.30" x2="655.88" y2="161.30" stroke="#555" stroke-width="0.8" />
<text x="655.48" y="169.72" font-family='"Liberation Sans", sans-serif' font-size="7.0" fill="#111" text-anchor="middle" font-weight="bold" textLength="8.60" lengthAdjust="spacingAndGlyphs" stroke="#111" stroke-width="0.07" >B4</text>
<line x1="669.94" y1="157.30" x2="669.94" y2="161.30" stroke="#555" stroke-width="0.8" />
<text x="669.54" y="169.72" font-family='"Liberation Sans", sans-serif' font-size="7.0" fill="#111" text-anchor="middle" font-weight="bold" textLength="8.60" lengthAdjust="spacingAndGlyphs" stroke="#111" stroke-width="0.07" >B5</text>
<line x1="684.00" y1="157.30" x2="684.00" y2="161.30" stroke="#555" stroke-width="0.8" />
<text x="683.60" y="169.72" font-family='"Liberation Sans", sans-serif' font-size="7.0" fill="#111" text-anchor="middle" font-weight="bold" textLength="8.60" lengthAdjust="spacingAndGlyphs" stroke="#111" stroke-width="0.07" >B7</text>
<line x1="698.06" y1="157.30" x2="698.06" y2="161.30" stroke="#555" stroke-width="0.8" />
<text x="697.66" y="169.72" font-family='"Liberation Sans", sans-serif' font-size="7.0" fill="#111" text-anchor="middle" font-weight="bold" textLength="8.60" lengthAdjust="spacingAndGlyphs" stroke="#111" stroke-width="0.07" >B8</text>
<line x1="712.12" y1="157.30" x2="712.12" y2="161.30" stroke="#555" stroke-width="0.8" />
<text x="711.72" y="169.72" font-family='"Liberation Sans", sans-serif' font-size="7.0" fill="#111" text-anchor="middle" font-weight="bold" textLength="8.60" lengthAdjust="spacingAndGlyphs" stroke="#111" stroke-width="0.07" >B9</text>
<line x1="726.18" y1="157.30" x2="726.18" y2="161.30" stroke="#555" stroke-width="0.8" />
<text x="725.78" y="169.72" font-family='"Liberation Sans", sans-serif' font-size="7.0" fill="#111" text-anchor="middle" font-weight="bold" textLength="12.40" lengthAdjust="spacingAndGlyphs" stroke="#111" stroke-width="0.07" >B13</text>
<text x="634.40" y="178.99" font-family='"Liberation Sans", sans-serif' font-size="7.2" fill="#222" text-anchor="middle" stroke="#222" stroke-width="0.07" >PRN</text>
<text x="514.40" y="93.66" font-family='"Liberation Sans", sans-serif' font-size="7.4" fill="#111" text-anchor="middle" textLength="42.00" lengthAdjust="spacingAndGlyphs" transform="rotate(-90 514.40 91.00)" stroke="#111" stroke-width="0.07" >CNR(dB-Hz)</text>
<circle cx="753" cy="51" r="13.5" fill="url(#grn)" stroke="#9adba4" stroke-width="0.9"/>
<text x="744.40" y="53.58" font-family='"Liberation Sans", sans-serif' font-size="6.6" fill="#eafbea" font-weight="bold" stroke="#eafbea" stroke-width="0.07" >32</text>
<rect x="2.50" y="190.20" width="248.60" height="189.90" fill="#0a30cc" />
<rect x="2.50" y="190.20" width="248.60" height="17.80" fill="url(#ta)" />
<rect x="2.50" y="191.80" width="2.20" height="17.80" fill="#0a34cc" opacity="0.75"/>
<rect x="248.90" y="191.80" width="2.20" height="17.80" fill="#0a34cc" opacity="0.75"/>
<rect x="5.10" y="208.00" width="243.60" height="168.50" fill="#ece9d8" />
<line x1="5.10" y1="208.50" x2="248.70" y2="208.50" stroke="#fbfaf6" stroke-width="0.9" />
<line x1="5.10" y1="376.30" x2="248.70" y2="376.30" stroke="#5d6188" stroke-width="0.6" />
<text x="24.40 29.93 35.45 40.98 46.50" y="202.87" transform="scale(0.84 1)" font-family='"Liberation Serif", serif' font-size="8.4" font-weight="bold" fill="#ffffff" stroke="#ffffff" stroke-width="0.4" text-anchor="middle" opacity="1">Track</text>
<path d="M2.50 190.20 h2.4 l-2.4 2.6 Z" fill="#f6f6fa" opacity="0.95"/>
<path d="M251.10 190.20 h-2.4 l2.4 2.6 Z" fill="#f6f6fa" opacity="0.95"/>
<rect x="236.10" y="194.40" width="11.20" height="11.80" fill="#df4a30" stroke="#ffffff" stroke-width="0.5" rx="1.6" stroke-opacity="0.7"/>
<path d="M238.90 197.50 L244.50 203.10 M244.50 197.50 L238.90 203.10" stroke="#fff" stroke-width="1.5" fill="none" opacity="0.95"/>
<rect x="222.90" y="194.40" width="10.80" height="11.80" fill="url(#ba)" stroke="#ffffff" stroke-width="0.5" rx="1.6" stroke-opacity="0.7"/>
<rect x="225.50" y="197.60" width="5.80" height="5.80" fill="none" stroke="#eaf1ff" stroke-width="0.9" />
<line x1="225.10" y1="198.00" x2="231.70" y2="198.00" stroke="#eaf1ff" stroke-width="1.3" />
<rect x="209.70" y="194.40" width="10.80" height="11.80" fill="url(#ba)" stroke="#ffffff" stroke-width="0.5" rx="1.6" stroke-opacity="0.7"/>
<rect x="211.90" y="201.60" width="4.80" height="2.20" fill="#f4f8ff" />
<circle cx="11.10" cy="199.50" r="3.5" fill="#0a1238"/>
<path d="M6.50 199.10 H15.90 M11.10 194.90 V204.10" stroke="#0a1238" stroke-width="2.2"/>
<circle cx="11.10" cy="199.30" r="1.1" fill="#3a4a8a"/>
<rect x="5.10" y="208.00" width="243.60" height="13.30" fill="#ece9d8" />
<line x1="5.10" y1="208.40" x2="248.70" y2="208.40" stroke="#fbfaf6" stroke-width="0.8" />
<rect x="6.50" y="208.60" width="35.10" height="12.40" fill="#f6f5ee" stroke="#fff" stroke-width="0.5" />
<line x1="41.80" y1="208.90" x2="41.80" y2="220.70" stroke="#7c796c" stroke-width="0.9" />
<rect x="7.50" y="209.00" width="33.10" height="9.80" fill="none" stroke="#333" stroke-width="0.6" stroke-dasharray="1 1"/>
<text x="9.90" y="216.22" font-family='"Liberation Sans", sans-serif' font-size="7.0" fill="#111" textLength="28.50" lengthAdjust="spacingAndGlyphs" stroke="#111" stroke-width="0.07" >Horizontal</text>
<text x="45.10" y="216.72" font-family='"Liberation Sans", sans-serif' font-size="7.0" fill="#222" textLength="20.10" lengthAdjust="spacingAndGlyphs" stroke="#222" stroke-width="0.07" >Vertical</text>
<line x1="68.50" y1="210.10" x2="68.50" y2="220.50" stroke="#6e6b60" stroke-width="0.9" />
<line x1="67.60" y1="210.10" x2="67.60" y2="220.50" stroke="#d9d6c6" stroke-width="0.6" />
<text x="71.90" y="216.72" font-family='"Liberation Sans", sans-serif' font-size="7.0" fill="#222" textLength="21.70" lengthAdjust="spacingAndGlyphs" stroke="#222" stroke-width="0.07" >Velocity</text>
<line x1="96.60" y1="210.10" x2="96.60" y2="220.50" stroke="#6e6b60" stroke-width="0.9" />
<line x1="95.70" y1="210.10" x2="95.70" y2="220.50" stroke="#d9d6c6" stroke-width="0.6" />
<text x="101.10" y="216.72" font-family='"Liberation Sans", sans-serif' font-size="7.0" fill="#222" textLength="12.40" lengthAdjust="spacingAndGlyphs" stroke="#222" stroke-width="0.07" >Pitch</text>
<line x1="121.20" y1="210.10" x2="121.20" y2="220.50" stroke="#6e6b60" stroke-width="0.9" />
<line x1="120.30" y1="210.10" x2="120.30" y2="220.50" stroke="#d9d6c6" stroke-width="0.6" />
<text x="125.80" y="216.72" font-family='"Liberation Sans", sans-serif' font-size="7.0" fill="#222" textLength="15.90" lengthAdjust="spacingAndGlyphs" stroke="#222" stroke-width="0.07" >Setup</text>
<line x1="145.90" y1="210.10" x2="145.90" y2="220.50" stroke="#6e6b60" stroke-width="0.9" />
<line x1="145.00" y1="210.10" x2="145.00" y2="220.50" stroke="#d9d6c6" stroke-width="0.6" />
<rect x="7.20" y="221.40" width="239.20" height="153.20" fill="#ffffff" />
<line x1="8.00" y1="221.40" x2="8.00" y2="374.60" stroke="#77777a" stroke-width="1.2" />
<line x1="7.20" y1="221.60" x2="246.40" y2="221.60" stroke="#e3e1d6" stroke-width="0.6" />
<line x1="246.10" y1="221.00" x2="246.10" y2="374.60" stroke="#2a2a2a" stroke-width="1" />
<line x1="7.20" y1="374.50" x2="246.40" y2="374.50" stroke="#b9b7ad" stroke-width="0.9" />
<line x1="78.00" y1="229.60" x2="78.00" y2="347.30" stroke="#c4c4c4" stroke-width="0.7" stroke-dasharray="1.5 1.7" />
<line x1="107.60" y1="229.60" x2="107.60" y2="347.30" stroke="#c4c4c4" stroke-width="0.7" stroke-dasharray="1.5 1.7" />
<line x1="137.20" y1="229.60" x2="137.20" y2="347.30" stroke="#c4c4c4" stroke-width="0.7" stroke-dasharray="1.5 1.7" />
<line x1="166.80" y1="229.60" x2="166.80" y2="347.30" stroke="#c4c4c4" stroke-width="0.7" stroke-dasharray="1.5 1.7" />
<line x1="196.40" y1="229.60" x2="196.40" y2="347.30" stroke="#c4c4c4" stroke-width="0.7" stroke-dasharray="1.5 1.7" />
<line x1="226.00" y1="229.60" x2="226.00" y2="347.30" stroke="#c4c4c4" stroke-width="0.7" stroke-dasharray="1.5 1.7" />
<line x1="36.80" y1="331.80" x2="237.80" y2="331.80" stroke="#c4c4c4" stroke-width="0.7" stroke-dasharray="1.5 1.7" />
<line x1="36.80" y1="288.40" x2="237.80" y2="288.40" stroke="#c4c4c4" stroke-width="0.7" stroke-dasharray="1.5 1.7" />
<line x1="36.80" y1="245.00" x2="237.80" y2="245.00" stroke="#c4c4c4" stroke-width="0.7" stroke-dasharray="1.5 1.7" />
<line x1="36.80" y1="229.60" x2="237.80" y2="229.60" stroke="#1a1a1a" stroke-width="0.9" />
<line x1="36.80" y1="229.20" x2="36.80" y2="347.90" stroke="#000" stroke-width="1.3" />
<line x1="36.20" y1="347.30" x2="237.80" y2="347.30" stroke="#000" stroke-width="1.2" />
<line x1="41.00" y1="347.30" x2="41.00" y2="348.80" stroke="#444" stroke-width="0.6" />
<line x1="48.40" y1="347.30" x2="48.40" y2="349.90" stroke="#444" stroke-width="0.6" />
<line x1="55.80" y1="347.30" x2="55.80" y2="348.80" stroke="#444" stroke-width="0.6" />
<line x1="63.20" y1="347.30" x2="63.20" y2="348.80" stroke="#444" stroke-width="0.6" />
<line x1="70.60" y1="347.30" x2="70.60" y2="348.80" stroke="#444" stroke-width="0.6" />
<line x1="78.00" y1="347.30" x2="78.00" y2="349.90" stroke="#444" stroke-width="0.6" />
<line x1="85.40" y1="347.30" x2="85.40" y2="348.80" stroke="#444" stroke-width="0.6" />
<line x1="92.80" y1="347.30" x2="92.80" y2="348.80" stroke="#444" stroke-width="0.6" />
<line x1="100.20" y1="347.30" x2="100.20" y2="348.80" stroke="#444" stroke-width="0.6" />
<line x1="107.60" y1="347.30" x2="107.60" y2="349.90" stroke="#444" stroke-width="0.6" />
<line x1="115.00" y1="347.30" x2="115.00" y2="348.80" stroke="#444" stroke-width="0.6" />
<line x1="122.40" y1="347.30" x2="122.40" y2="348.80" stroke="#444" stroke-width="0.6" />
<line x1="129.80" y1="347.30" x2="129.80" y2="348.80" stroke="#444" stroke-width="0.6" />
<line x1="137.20" y1="347.30" x2="137.20" y2="349.90" stroke="#444" stroke-width="0.6" />
<line x1="144.60" y1="347.30" x2="144.60" y2="348.80" stroke="#444" stroke-width="0.6" />
<line x1="152.00" y1="347.30" x2="152.00" y2="348.80" stroke="#444" stroke-width="0.6" />
<line x1="159.40" y1="347.30" x2="159.40" y2="348.80" stroke="#444" stroke-width="0.6" />
<line x1="166.80" y1="347.30" x2="166.80" y2="349.90" stroke="#444" stroke-width="0.6" />
<line x1="174.20" y1="347.30" x2="174.20" y2="348.80" stroke="#444" stroke-width="0.6" />
<line x1="181.60" y1="347.30" x2="181.60" y2="348.80" stroke="#444" stroke-width="0.6" />
<line x1="189.00" y1="347.30" x2="189.00" y2="348.80" stroke="#444" stroke-width="0.6" />
<line x1="196.40" y1="347.30" x2="196.40" y2="349.90" stroke="#444" stroke-width="0.6" />
<line x1="203.80" y1="347.30" x2="203.80" y2="348.80" stroke="#444" stroke-width="0.6" />
<line x1="211.20" y1="347.30" x2="211.20" y2="348.80" stroke="#444" stroke-width="0.6" />
<line x1="218.60" y1="347.30" x2="218.60" y2="348.80" stroke="#444" stroke-width="0.6" />
<line x1="226.00" y1="347.30" x2="226.00" y2="349.90" stroke="#444" stroke-width="0.6" />
<line x1="233.40" y1="347.30" x2="233.40" y2="348.80" stroke="#444" stroke-width="0.6" />
<text x="48.00" y="357.73" font-family='"Liberation Sans", sans-serif' font-size="6.2" fill="#111" text-anchor="middle" font-weight="bold" stroke="#111" stroke-width="0.07" >-6</text>
<text x="77.60" y="357.73" font-family='"Liberation Sans", sans-serif' font-size="6.2" fill="#111" text-anchor="middle" font-weight="bold" stroke="#111" stroke-width="0.07" >-4</text>
<text x="107.20" y="357.73" font-family='"Liberation Sans", sans-serif' font-size="6.2" fill="#111" text-anchor="middle" font-weight="bold" stroke="#111" stroke-width="0.07" >-2</text>
<text x="136.80" y="357.73" font-family='"Liberation Sans", sans-serif' font-size="6.2" fill="#111" text-anchor="middle" font-weight="bold" stroke="#111" stroke-width="0.07" >0</text>
<text x="166.40" y="357.73" font-family='"Liberation Sans", sans-serif' font-size="6.2" fill="#111" text-anchor="middle" font-weight="bold" stroke="#111" stroke-width="0.07" >2</text>
<text x="196.00" y="357.73" font-family='"Liberation Sans", sans-serif' font-size="6.2" fill="#111" text-anchor="middle" font-weight="bold" stroke="#111" stroke-width="0.07" >4</text>
<text x="225.60" y="357.73" font-family='"Liberation Sans", sans-serif' font-size="6.2" fill="#111" text-anchor="middle" font-weight="bold" stroke="#111" stroke-width="0.07" >6</text>
<text x="28.60" y="334.03" font-family='"Liberation Sans", sans-serif' font-size="6.2" fill="#111" text-anchor="middle" font-weight="bold" transform="rotate(-90 28.60 331.80)" stroke="#111" stroke-width="0.07" >-5</text>
<line x1="34.80" y1="331.80" x2="36.80" y2="331.80" stroke="#444" stroke-width="0.6" />
<text x="28.60" y="290.63" font-family='"Liberation Sans", sans-serif' font-size="6.2" fill="#111" text-anchor="middle" font-weight="bold" transform="rotate(-90 28.60 288.40)" stroke="#111" stroke-width="0.07" >0</text>
<line x1="34.80" y1="288.40" x2="36.80" y2="288.40" stroke="#444" stroke-width="0.6" />
<text x="28.60" y="247.23" font-family='"Liberation Sans", sans-serif' font-size="6.2" fill="#111" text-anchor="middle" font-weight="bold" transform="rotate(-90 28.60 245.00)" stroke="#111" stroke-width="0.07" >5</text>
<line x1="34.80" y1="245.00" x2="36.80" y2="245.00" stroke="#444" stroke-width="0.6" />
<text x="20.90" y="291.07" font-family='"Liberation Sans", sans-serif' font-size="6.3" fill="#111" text-anchor="middle" font-weight="bold" textLength="46.00" lengthAdjust="spacingAndGlyphs" transform="rotate(-90 20.90 288.80)" stroke="#111" stroke-width="0.07" >Delta North (m)</text>
<text x="136.60" y="366.07" font-family='"Liberation Sans", sans-serif' font-size="6.3" fill="#111" text-anchor="middle" font-weight="bold" textLength="43.60" lengthAdjust="spacingAndGlyphs" stroke="#111" stroke-width="0.07" >Delta East (m)</text>
<rect x="136.20" y="262.60" width="4.80" height="3.40" fill="#0a0ae0" />
<rect x="138.00" y="261.60" width="3.00" height="1.40" fill="#0a0ae0" />
<text x="135.60" y="283.66" font-family='"Liberation Sans", sans-serif' font-size="7.4" fill="#e01818" font-weight="bold" stroke="#e01818" stroke-width="0.07" >F</text>
<path d="M137 285.8 L139.6 288.4 L137 291 L134.4 288.4 Z" fill="#d01010" stroke="#3a0000" stroke-width="0.6"/>
<rect x="189.60" y="222.40" width="1.60" height="4.60" fill="#a89a30" />
<circle cx="190.5" cy="232.6" r="2.6" fill="none" stroke="#c0c0c8" stroke-width="0.5" stroke-dasharray="1 1"/>
<rect x="189.10" y="231.20" width="2.90" height="2.90" fill="#0a0ae0" />
<rect x="251.10" y="190.20" width="248.30" height="189.90" fill="#6876d0" />
<rect x="251.10" y="190.20" width="248.30" height="17.80" fill="url(#ti)" />
<rect x="251.10" y="191.80" width="2.20" height="17.80" fill="#6272cc" opacity="0.75"/>
<rect x="497.20" y="191.80" width="2.20" height="17.80" fill="#6272cc" opacity="0.75"/>
<rect x="253.70" y="208.00" width="243.30" height="169.10" fill="#ece9d8" />
<line x1="253.70" y1="208.50" x2="497.00" y2="208.50" stroke="#fbfaf6" stroke-width="0.9" />
<line x1="253.70" y1="376.90" x2="497.00" y2="376.90" stroke="#5d6188" stroke-width="0.6" />
<text x="320.36 325.88 331.40 336.93 342.45 347.98 353.50 359.02 364.55 370.07" y="202.87" transform="scale(0.84 1)" font-family='"Liberation Serif", serif' font-size="8.4" font-weight="bold" fill="#d6e3fb" stroke="#d6e3fb" stroke-width="0.4" text-anchor="middle" opacity="0.92">Statistics</text>
<path d="M251.10 190.20 h2.4 l-2.4 2.6 Z" fill="#f6f6fa" opacity="0.95"/>
<path d="M499.40 190.20 h-2.4 l2.4 2.6 Z" fill="#f6f6fa" opacity="0.95"/>
<rect x="484.40" y="194.40" width="11.20" height="11.80" fill="#ad6680" stroke="#c9d6f6" stroke-width="0.5" rx="1.6" stroke-opacity="0.7"/>
<path d="M487.20 197.50 L492.80 203.10 M492.80 197.50 L487.20 203.10" stroke="#fff" stroke-width="1.5" fill="none" opacity="0.95"/>
<rect x="471.20" y="194.40" width="10.80" height="11.80" fill="url(#bi)" stroke="#c9d6f6" stroke-width="0.5" rx="1.6" stroke-opacity="0.7"/>
<rect x="473.80" y="197.60" width="5.80" height="5.80" fill="none" stroke="#eaf1ff" stroke-width="0.9" />
<line x1="473.40" y1="198.00" x2="480.00" y2="198.00" stroke="#eaf1ff" stroke-width="1.3" />
<rect x="458.00" y="194.40" width="10.80" height="11.80" fill="url(#bi)" stroke="#c9d6f6" stroke-width="0.5" rx="1.6" stroke-opacity="0.7"/>
<rect x="460.20" y="201.60" width="4.80" height="2.20" fill="#f4f8ff" />
<rect x="254.80" y="195.10" width="8.40" height="8.80" fill="#c9cbd8" />
<rect x="262.80" y="195.10" width="0.90" height="9.00" fill="#1b2550" />
<rect x="258.00" y="199.90" width="1.60" height="1.80" fill="#5a5f8a" />
<rect x="253.70" y="208.00" width="243.30" height="13.30" fill="#ece9d8" />
<line x1="253.70" y1="208.40" x2="497.00" y2="208.40" stroke="#fbfaf6" stroke-width="0.8" />
<rect x="255.00" y="208.60" width="35.80" height="12.40" fill="#f6f5ee" stroke="#fff" stroke-width="0.5" />
<line x1="291.00" y1="208.90" x2="291.00" y2="220.70" stroke="#7c796c" stroke-width="0.9" />
<text x="258.40" y="216.22" font-family='"Liberation Sans", sans-serif' font-size="7.0" fill="#111" textLength="29.20" lengthAdjust="spacingAndGlyphs" stroke="#111" stroke-width="0.07" >Signal - Fix</text>
<text x="294.80" y="216.72" font-family='"Liberation Sans", sans-serif' font-size="7.0" fill="#222" textLength="28.70" lengthAdjust="spacingAndGlyphs" stroke="#222" stroke-width="0.07" >Fix Quality</text>
<line x1="326.50" y1="210.10" x2="326.50" y2="220.50" stroke="#6e6b60" stroke-width="0.9" />
<line x1="325.60" y1="210.10" x2="325.60" y2="220.50" stroke="#d9d6c6" stroke-width="0.6" />
<text x="330.20" y="216.72" font-family='"Liberation Sans", sans-serif' font-size="7.0" fill="#222" textLength="8.00" lengthAdjust="spacingAndGlyphs" stroke="#222" stroke-width="0.07" >SV</text>
<line x1="350.30" y1="210.10" x2="350.30" y2="220.50" stroke="#6e6b60" stroke-width="0.9" />
<line x1="349.40" y1="210.10" x2="349.40" y2="220.50" stroke="#d9d6c6" stroke-width="0.6" />
<text x="355.00" y="216.72" font-family='"Liberation Sans", sans-serif' font-size="7.0" fill="#222" textLength="13.00" lengthAdjust="spacingAndGlyphs" stroke="#222" stroke-width="0.07" >DOP</text>
<line x1="375.20" y1="210.10" x2="375.20" y2="220.50" stroke="#6e6b60" stroke-width="0.9" />
<line x1="374.30" y1="210.10" x2="374.30" y2="220.50" stroke="#d9d6c6" stroke-width="0.6" />
<rect x="255.80" y="221.30" width="238.20" height="153.10" fill="#e4e4f8" />
<line x1="255.40" y1="221.30" x2="494.20" y2="221.30" stroke="#f4f3ec" stroke-width="0.8" />
<line x1="494.40" y1="221.00" x2="494.40" y2="374.60" stroke="#f6f5ee" stroke-width="1.2" />
<line x1="255.40" y1="374.60" x2="494.40" y2="374.60" stroke="#f6f5ee" stroke-width="1" />
<line x1="320.90" y1="229.60" x2="320.90" y2="326.20" stroke="#c2c2d0" stroke-width="0.7" stroke-dasharray="1.5 1.7" />
<line x1="360.40" y1="229.60" x2="360.40" y2="326.20" stroke="#c2c2d0" stroke-width="0.7" stroke-dasharray="1.5 1.7" />
<line x1="399.90" y1="229.60" x2="399.90" y2="326.20" stroke="#c2c2d0" stroke-width="0.7" stroke-dasharray="1.5 1.7" />
<line x1="439.40" y1="229.60" x2="439.40" y2="326.20" stroke="#c2c2d0" stroke-width="0.7" stroke-dasharray="1.5 1.7" />
<line x1="280.60" y1="319.00" x2="466.60" y2="319.00" stroke="#c2c2d0" stroke-width="0.7" stroke-dasharray="1.5 1.7" />
<line x1="280.60" y1="304.10" x2="466.60" y2="304.10" stroke="#c2c2d0" stroke-width="0.7" stroke-dasharray="1.5 1.7" />
<line x1="280.60" y1="289.20" x2="466.60" y2="289.20" stroke="#c2c2d0" stroke-width="0.7" stroke-dasharray="1.5 1.7" />
<line x1="280.60" y1="274.30" x2="466.60" y2="274.30" stroke="#c2c2d0" stroke-width="0.7" stroke-dasharray="1.5 1.7" />
<line x1="280.60" y1="259.40" x2="466.60" y2="259.40" stroke="#c2c2d0" stroke-width="0.7" stroke-dasharray="1.5 1.7" />
<line x1="280.60" y1="244.50" x2="466.60" y2="244.50" stroke="#c2c2d0" stroke-width="0.7" stroke-dasharray="1.5 1.7" />
<polyline points="306.0,303.5 306.8,277.1 316.8,277.1 319.4,286.8 321.9,284.6 331.9,284.6 333.1,294.3 334.4,285.9 345.3,287.1 347.8,303.8 349.4,285.9 356.1,285.9 358.3,303.8 360.3,298.5 362.3,293.4 367.0,284.6 369.5,284.6 370.3,299.3 372.8,288.4 375.0,285.4 377.5,285.9 378.7,303.8 380.8,293.4 386.7,284.8 391.7,284.3 396.7,287.6 410.1,287.6 410.9,288.4 423.5,287.6 431.0,287.6 432.7,305.1 433.8,293.1 441.8,293.1 442.7,296.8 446.0,296.8 449.4,290.9 456.0,290.4 457.7,296.8 460.2,289.3 466.0,288.8" fill="none" stroke="#f01818" stroke-width="1.3" stroke-linejoin="round"/>
<polyline points="305.4,326.0 305.4,266.0 306.8,264.7 308.5,266.2 310.2,264.7 333.6,264.7 334.4,266.4 344.4,266.7 346.1,270.9 348.6,266.7 356.1,266.7 358.6,277.6 361.1,275.9 363.6,266.7 369.5,266.7 371.2,273.4 373.7,267.5 375.0,266.7 378.3,268.4 381.7,264.2 391.7,261.7 395.0,260.9 431.0,260.9 432.7,265.0 434.3,262.0 445.2,262.0 446.9,260.9 455.2,261.4 457.7,265.0 460.2,264.2 462.7,260.4 466.0,259.2" fill="none" stroke="#0a18e8" stroke-width="1.5" stroke-linejoin="round"/>
<line x1="281.00" y1="314.20" x2="305.20" y2="314.20" stroke="#0c8a1c" stroke-width="1.6" />
<line x1="305.20" y1="241.80" x2="466.40" y2="241.80" stroke="#0a7a18" stroke-width="2.0" />
<line x1="280.60" y1="229.60" x2="466.60" y2="229.60" stroke="#2a2a2a" stroke-width="0.9" />
<line x1="466.60" y1="229.60" x2="466.60" y2="326.20" stroke="#1a1a1a" stroke-width="0.9" />
<line x1="280.60" y1="229.20" x2="280.60" y2="326.80" stroke="#000" stroke-width="1.3" />
<line x1="280.00" y1="326.20" x2="467.00" y2="326.20" stroke="#000" stroke-width="1.2" />
<line x1="281.40" y1="326.20" x2="281.40" y2="328.60" stroke="#333" stroke-width="0.6" />
<line x1="289.30" y1="326.20" x2="289.30" y2="327.60" stroke="#333" stroke-width="0.6" />
<line x1="297.20" y1="326.20" x2="297.20" y2="327.60" stroke="#333" stroke-width="0.6" />
<line x1="305.10" y1="326.20" x2="305.10" y2="327.60" stroke="#333" stroke-width="0.6" />
<line x1="313.00" y1="326.20" x2="313.00" y2="327.60" stroke="#333" stroke-width="0.6" />
<line x1="320.90" y1="326.20" x2="320.90" y2="328.60" stroke="#333" stroke-width="0.6" />
<line x1="328.80" y1="326.20" x2="328.80" y2="327.60" stroke="#333" stroke-width="0.6" />
<line x1="336.70" y1="326.20" x2="336.70" y2="327.60" stroke="#333" stroke-width="0.6" />
<line x1="344.60" y1="326.20" x2="344.60" y2="327.60" stroke="#333" stroke-width="0.6" />
<line x1="352.50" y1="326.20" x2="352.50" y2="327.60" stroke="#333" stroke-width="0.6" />
<line x1="360.40" y1="326.20" x2="360.40" y2="328.60" stroke="#333" stroke-width="0.6" />
<line x1="368.30" y1="326.20" x2="368.30" y2="327.60" stroke="#333" stroke-width="0.6" />
<line x1="376.20" y1="326.20" x2="376.20" y2="327.60" stroke="#333" stroke-width="0.6" />
<line x1="384.10" y1="326.20" x2="384.10" y2="327.60" stroke="#333" stroke-width="0.6" />
<line x1="392.00" y1="326.20" x2="392.00" y2="327.60" stroke="#333" stroke-width="0.6" />
<line x1="399.90" y1="326.20" x2="399.90" y2="328.60" stroke="#333" stroke-width="0.6" />
<line x1="407.80" y1="326.20" x2="407.80" y2="327.60" stroke="#333" stroke-width="0.6" />
<line x1="415.70" y1="326.20" x2="415.70" y2="327.60" stroke="#333" stroke-width="0.6" />
<line x1="423.60" y1="326.20" x2="423.60" y2="327.60" stroke="#333" stroke-width="0.6" />
<line x1="431.50" y1="326.20" x2="431.50" y2="327.60" stroke="#333" stroke-width="0.6" />
<line x1="439.40" y1="326.20" x2="439.40" y2="328.60" stroke="#333" stroke-width="0.6" />
<line x1="447.30" y1="326.20" x2="447.30" y2="327.60" stroke="#333" stroke-width="0.6" />
<line x1="455.20" y1="326.20" x2="455.20" y2="327.60" stroke="#333" stroke-width="0.6" />
<line x1="463.10" y1="326.20" x2="463.10" y2="327.60" stroke="#333" stroke-width="0.6" />
<text x="276.40" y="321.40" font-family='"Liberation Sans", sans-serif' font-size="6.1" fill="#111" text-anchor="end" font-weight="bold" stroke="#111" stroke-width="0.07" >10</text>
<line x1="278.80" y1="319.00" x2="280.60" y2="319.00" stroke="#333" stroke-width="0.6" />
<text x="276.40" y="306.50" font-family='"Liberation Sans", sans-serif' font-size="6.1" fill="#111" text-anchor="end" font-weight="bold" stroke="#111" stroke-width="0.07" >20</text>
<line x1="278.80" y1="304.10" x2="280.60" y2="304.10" stroke="#333" stroke-width="0.6" />
<text x="276.40" y="291.60" font-family='"Liberation Sans", sans-serif' font-size="6.1" fill="#111" text-anchor="end" font-weight="bold" stroke="#111" stroke-width="0.07" >30</text>
<line x1="278.80" y1="289.20" x2="280.60" y2="289.20" stroke="#333" stroke-width="0.6" />
<text x="276.40" y="276.70" font-family='"Liberation Sans", sans-serif' font-size="6.1" fill="#111" text-anchor="end" font-weight="bold" stroke="#111" stroke-width="0.07" >40</text>
<line x1="278.80" y1="274.30" x2="280.60" y2="274.30" stroke="#333" stroke-width="0.6" />
<text x="276.40" y="261.80" font-family='"Liberation Sans", sans-serif' font-size="6.1" fill="#111" text-anchor="end" font-weight="bold" stroke="#111" stroke-width="0.07" >50</text>
<line x1="278.80" y1="259.40" x2="280.60" y2="259.40" stroke="#333" stroke-width="0.6" />
<text x="276.40" y="246.90" font-family='"Liberation Sans", sans-serif' font-size="6.1" fill="#111" text-anchor="end" font-weight="bold" stroke="#111" stroke-width="0.07" >60</text>
<line x1="278.80" y1="244.50" x2="280.60" y2="244.50" stroke="#333" stroke-width="0.6" />
<text x="276.40" y="232.10" font-family='"Liberation Sans", sans-serif' font-size="6.1" fill="#111" text-anchor="end" font-weight="bold" stroke="#111" stroke-width="0.07" >70</text>
<line x1="278.80" y1="229.60" x2="280.60" y2="229.60" stroke="#333" stroke-width="0.6" />
<text x="281.20" y="337.00" font-family='"Liberation Sans", sans-serif' font-size="6.4" fill="#111" text-anchor="middle" font-weight="bold" stroke="#111" stroke-width="0.07" >0</text>
<text x="320.70" y="337.00" font-family='"Liberation Sans", sans-serif' font-size="6.4" fill="#111" text-anchor="middle" font-weight="bold" stroke="#111" stroke-width="0.07" >50</text>
<text x="360.20" y="337.00" font-family='"Liberation Sans", sans-serif' font-size="6.4" fill="#111" text-anchor="middle" font-weight="bold" stroke="#111" stroke-width="0.07" >100</text>
<text x="399.70" y="337.00" font-family='"Liberation Sans", sans-serif' font-size="6.4" fill="#111" text-anchor="middle" font-weight="bold" stroke="#111" stroke-width="0.07" >150</text>
<text x="439.20" y="337.00" font-family='"Liberation Sans", sans-serif' font-size="6.4" fill="#111" text-anchor="middle" font-weight="bold" stroke="#111" stroke-width="0.07" >200</text>
<text x="263.60" y="280.70" font-family='"Liberation Sans", sans-serif' font-size="6.4" fill="#222" text-anchor="middle" font-weight="bold" transform="rotate(-90 263.60 278.40)" stroke="#222" stroke-width="0.07" >dB-Hz</text>
<text x="372.80" y="344.58" font-family='"Liberation Sans", sans-serif' font-size="6.6" fill="#111" text-anchor="middle" font-weight="bold" stroke="#111" stroke-width="0.07" >Time</text>
<line x1="466.60" y1="241.80" x2="468.60" y2="241.80" stroke="#333" stroke-width="0.6" />
<line x1="466.60" y1="278.00" x2="468.60" y2="278.00" stroke="#333" stroke-width="0.6" />
<line x1="466.60" y1="296.20" x2="468.60" y2="296.20" stroke="#333" stroke-width="0.6" />
<line x1="466.60" y1="314.00" x2="468.60" y2="314.00" stroke="#333" stroke-width="0.6" />
<text x="469.60" y="243.96" font-family='"Liberation Sans", sans-serif' font-size="6.0" fill="#111" stroke="#111" stroke-width="0.07" >3D</text>
<text x="469.60" y="315.96" font-family='"Liberation Sans", sans-serif' font-size="6.0" fill="#222" textLength="17.60" lengthAdjust="spacingAndGlyphs" stroke="#222" stroke-width="0.07" >No Fix</text>
<rect x="291.60" y="353.60" width="137.80" height="12.20" fill="#555" opacity="0.6"/>
<rect x="290.60" y="352.60" width="137.80" height="12.20" fill="#ffffff" stroke="#222" stroke-width="0.7" />
<rect x="293.40" y="355.00" width="6.60" height="6.80" fill="#ffffff" stroke="#777" stroke-width="0.8" />
<path d="M294.8 358.4 L296.2 360.2 L298.8 356.4" stroke="#111" stroke-width="1.1" fill="none"/>
<text x="303.00" y="360.98" font-family='"Liberation Sans", sans-serif' font-size="6.6" fill="#e01010" font-weight="bold" textLength="29.40" lengthAdjust="spacingAndGlyphs" stroke="#e01010" stroke-width="0.07" >−MinCNR</text>
<rect x="336.60" y="355.00" width="6.60" height="6.80" fill="#ffffff" stroke="#777" stroke-width="0.8" />
<path d="M338.0 358.4 L339.4 360.2 L342.0 356.4" stroke="#111" stroke-width="1.1" fill="none"/>
<text x="346.60" y="360.98" font-family='"Liberation Sans", sans-serif' font-size="6.6" fill="#1010d8" font-weight="bold" textLength="30.60" lengthAdjust="spacingAndGlyphs" stroke="#1010d8" stroke-width="0.07" >−MaxCNR</text>
<rect x="380.60" y="355.00" width="6.60" height="6.80" fill="#ffffff" stroke="#777" stroke-width="0.8" />
<path d="M382.0 358.4 L383.4 360.2 L386.0 356.4" stroke="#111" stroke-width="1.1" fill="none"/>
<text x="390.60" y="360.98" font-family='"Liberation Sans", sans-serif' font-size="6.6" fill="#0a7a18" font-weight="bold" textLength="13.60" lengthAdjust="spacingAndGlyphs" stroke="#0a7a18" stroke-width="0.07" >▪ Fix</text>
<rect x="499.40" y="190.20" width="248.40" height="189.90" fill="#6876d0" />
<rect x="499.40" y="190.20" width="248.40" height="17.80" fill="url(#ti)" />
<rect x="499.40" y="191.80" width="2.20" height="17.80" fill="#6272cc" opacity="0.75"/>
<rect x="745.60" y="191.80" width="2.20" height="17.80" fill="#6272cc" opacity="0.75"/>
<rect x="502.00" y="208.00" width="242.90" height="169.10" fill="#ece9d8" />
<line x1="502.00" y1="208.50" x2="744.90" y2="208.50" stroke="#fbfaf6" stroke-width="0.9" />
<line x1="502.00" y1="376.90" x2="744.90" y2="376.90" stroke="#5d6188" stroke-width="0.6" />
<text x="615.95 621.48 627.00 632.52 638.05 643.57 649.10 654.62 660.14" y="202.87" transform="scale(0.84 1)" font-family='"Liberation Serif", serif' font-size="8.4" font-weight="bold" fill="#d6e3fb" stroke="#d6e3fb" stroke-width="0.4" text-anchor="middle" opacity="0.92">NMEA Text</text>
<path d="M499.40 190.20 h2.4 l-2.4 2.6 Z" fill="#f6f6fa" opacity="0.95"/>
<path d="M747.80 190.20 h-2.4 l2.4 2.6 Z" fill="#f6f6fa" opacity="0.95"/>
<rect x="732.20" y="194.40" width="11.20" height="11.80" fill="#ad6680" stroke="#c9d6f6" stroke-width="0.5" rx="1.6" stroke-opacity="0.7"/>
<path d="M735.00 197.50 L740.60 203.10 M740.60 197.50 L735.00 203.10" stroke="#fff" stroke-width="1.5" fill="none" opacity="0.95"/>
<rect x="719.00" y="194.40" width="10.80" height="11.80" fill="url(#bi)" stroke="#c9d6f6" stroke-width="0.5" rx="1.6" stroke-opacity="0.7"/>
<rect x="721.60" y="197.60" width="5.80" height="5.80" fill="none" stroke="#eaf1ff" stroke-width="0.9" />
<line x1="721.20" y1="198.00" x2="727.80" y2="198.00" stroke="#eaf1ff" stroke-width="1.3" />
<rect x="705.80" y="194.40" width="10.80" height="11.80" fill="url(#bi)" stroke="#c9d6f6" stroke-width="0.5" rx="1.6" stroke-opacity="0.7"/>
<rect x="708.00" y="201.60" width="4.80" height="2.20" fill="#f4f8ff" />
<rect x="502.70" y="195.10" width="8.80" height="8.80" fill="#ffffff" />
<rect x="502.90" y="196.90" width="8.00" height="1.80" fill="#c88a92" />
<rect x="510.90" y="195.90" width="0.90" height="8.20" fill="#1b2550" />
<text x="503.70" y="203.10" font-family='"Liberation Sans", sans-serif' font-size="5" fill="#111" font-weight="bold" stroke="#111" stroke-width="0.07" font-style="italic">sv</text>
<rect x="502.00" y="208.00" width="242.90" height="13.30" fill="#ece9d8" />
<line x1="502.00" y1="208.40" x2="744.90" y2="208.40" stroke="#fbfaf6" stroke-width="0.8" />
<rect x="503.80" y="208.60" width="37.40" height="12.40" fill="#f6f5ee" stroke="#fff" stroke-width="0.5" />
<line x1="541.40" y1="208.90" x2="541.40" y2="220.70" stroke="#7c796c" stroke-width="0.9" />
<text x="507.20" y="216.22" font-family='"Liberation Sans", sans-serif' font-size="7.0" fill="#111" textLength="30.80" lengthAdjust="spacingAndGlyphs" stroke="#111" stroke-width="0.07" >Information</text>
<text x="544.30" y="216.72" font-family='"Liberation Sans", sans-serif' font-size="7.0" fill="#222" textLength="17.50" lengthAdjust="spacingAndGlyphs" stroke="#222" stroke-width="0.07" >NMEA</text>
<line x1="564.80" y1="210.10" x2="564.80" y2="220.50" stroke="#6e6b60" stroke-width="0.9" />
<line x1="563.90" y1="210.10" x2="563.90" y2="220.50" stroke="#d9d6c6" stroke-width="0.6" />
<text x="569.40" y="216.72" font-family='"Liberation Sans", sans-serif' font-size="7.0" fill="#222" textLength="31.70" lengthAdjust="spacingAndGlyphs" stroke="#222" stroke-width="0.07" >MTK Binary</text>
<line x1="604.00" y1="210.10" x2="604.00" y2="220.50" stroke="#6e6b60" stroke-width="0.9" />
<line x1="603.10" y1="210.10" x2="603.10" y2="220.50" stroke="#d9d6c6" stroke-width="0.6" />
<text x="608.30" y="216.72" font-family='"Liberation Sans", sans-serif' font-size="7.0" fill="#222" textLength="18.40" lengthAdjust="spacingAndGlyphs" stroke="#222" stroke-width="0.07" >Packet</text>
<line x1="630.80" y1="210.10" x2="630.80" y2="220.50" stroke="#6e6b60" stroke-width="0.9" />
<line x1="629.90" y1="210.10" x2="629.90" y2="220.50" stroke="#d9d6c6" stroke-width="0.6" />
<rect x="503.20" y="221.60" width="239.60" height="153.60" fill="#f2f0e6" />
<rect x="503.40" y="221.80" width="229.80" height="144.00" fill="#ece8da" />
<clipPath id="tbl"><rect x="503.4" y="221.8" width="229.8" height="144.4"/></clipPath>
<g clip-path="url(#tbl)">
<rect x="504.00" y="222.20" width="23.60" height="9.20" fill="#316ac5" />
<line x1="503.40" y1="231.49" x2="733.20" y2="231.49" stroke="#d2cebc" stroke-width="0.7" />
<text x="505.60" y="229.28" font-family='"Liberation Sans", sans-serif' font-size="6.9" fill="#dfe9ff" textLength="13.40" lengthAdjust="spacingAndGlyphs" stroke="#dfe9ff" stroke-width="0.07" >GGA</text>
<text x="530.00" y="229.28" font-family='"Liberation Sans", sans-serif' font-size="6.9" fill="#1a1a1a" textLength="26.70" lengthAdjust="spacingAndGlyphs" stroke="#1a1a1a" stroke-width="0.07" >UTC Time</text>
<text x="578.80" y="229.28" font-family='"Liberation Sans", sans-serif' font-size="6.9" fill="#1a1a1a" textLength="36.70" lengthAdjust="spacingAndGlyphs" stroke="#1a1a1a" stroke-width="0.07" >09:27:54.000</text>
<line x1="503.40" y1="240.86" x2="733.20" y2="240.86" stroke="#d2cebc" stroke-width="0.7" />
<text x="505.60" y="238.65" font-family='"Liberation Sans", sans-serif' font-size="6.9" fill="#222" textLength="13.40" lengthAdjust="spacingAndGlyphs" stroke="#222" stroke-width="0.07" >GGA</text>
<text x="530.00" y="238.65" font-family='"Liberation Sans", sans-serif' font-size="6.9" fill="#1a1a1a" textLength="20.90" lengthAdjust="spacingAndGlyphs" stroke="#1a1a1a" stroke-width="0.07" >Latitude</text>
<text x="578.80" y="238.65" font-family='"Liberation Sans", sans-serif' font-size="6.9" fill="#1a1a1a" textLength="43.00" lengthAdjust="spacingAndGlyphs" stroke="#1a1a1a" stroke-width="0.07" >22.57877167 N</text>
<line x1="503.40" y1="250.23" x2="733.20" y2="250.23" stroke="#d2cebc" stroke-width="0.7" />
<text x="505.60" y="248.02" font-family='"Liberation Sans", sans-serif' font-size="6.9" fill="#222" textLength="13.40" lengthAdjust="spacingAndGlyphs" stroke="#222" stroke-width="0.07" >GGA</text>
<text x="530.00" y="248.02" font-family='"Liberation Sans", sans-serif' font-size="6.9" fill="#1a1a1a" textLength="26.70" lengthAdjust="spacingAndGlyphs" stroke="#1a1a1a" stroke-width="0.07" >Longitude</text>
<text x="578.80" y="248.02" font-family='"Liberation Sans", sans-serif' font-size="6.9" fill="#1a1a1a" textLength="47.50" lengthAdjust="spacingAndGlyphs" stroke="#1a1a1a" stroke-width="0.07" >113.90766500 E</text>
<line x1="503.40" y1="259.60" x2="733.20" y2="259.60" stroke="#d2cebc" stroke-width="0.7" />
<text x="505.60" y="257.39" font-family='"Liberation Sans", sans-serif' font-size="6.9" fill="#222" textLength="13.40" lengthAdjust="spacingAndGlyphs" stroke="#222" stroke-width="0.07" >GGA</text>
<text x="530.00" y="257.39" font-family='"Liberation Sans", sans-serif' font-size="6.9" fill="#1a1a1a" textLength="19.00" lengthAdjust="spacingAndGlyphs" stroke="#1a1a1a" stroke-width="0.07" >Pos Fix</text>
<text x="578.80" y="257.39" font-family='"Liberation Sans", sans-serif' font-size="6.9" fill="#1a1a1a" textLength="26.70" lengthAdjust="spacingAndGlyphs" stroke="#1a1a1a" stroke-width="0.07" >Valid SPS</text>
<line x1="503.40" y1="268.97" x2="733.20" y2="268.97" stroke="#d2cebc" stroke-width="0.7" />
<text x="505.60" y="266.76" font-family='"Liberation Sans", sans-serif' font-size="6.9" fill="#222" textLength="13.40" lengthAdjust="spacingAndGlyphs" stroke="#222" stroke-width="0.07" >GGA</text>
<text x="530.00" y="266.76" font-family='"Liberation Sans", sans-serif' font-size="6.9" fill="#1a1a1a" textLength="46.00" lengthAdjust="spacingAndGlyphs" stroke="#1a1a1a" stroke-width="0.07" >Num of SV Used</text>
<text x="578.80" y="266.76" font-family='"Liberation Sans", sans-serif' font-size="6.9" fill="#1a1a1a" textLength="7.10" lengthAdjust="spacingAndGlyphs" stroke="#1a1a1a" stroke-width="0.07" >14</text>
<line x1="503.40" y1="278.33" x2="733.20" y2="278.33" stroke="#d2cebc" stroke-width="0.7" />
<text x="505.60" y="276.13" font-family='"Liberation Sans", sans-serif' font-size="6.9" fill="#222" textLength="13.40" lengthAdjust="spacingAndGlyphs" stroke="#222" stroke-width="0.07" >GGA</text>
<text x="530.00" y="276.13" font-family='"Liberation Sans", sans-serif' font-size="6.9" fill="#1a1a1a" textLength="17.30" lengthAdjust="spacingAndGlyphs" stroke="#1a1a1a" stroke-width="0.07" >HDOP</text>
<text x="578.80" y="276.13" font-family='"Liberation Sans", sans-serif' font-size="6.9" fill="#1a1a1a" textLength="16.00" lengthAdjust="spacingAndGlyphs" stroke="#1a1a1a" stroke-width="0.07" >0.810</text>
<line x1="503.40" y1="287.70" x2="733.20" y2="287.70" stroke="#d2cebc" stroke-width="0.7" />
<text x="505.60" y="285.50" font-family='"Liberation Sans", sans-serif' font-size="6.9" fill="#222" textLength="13.40" lengthAdjust="spacingAndGlyphs" stroke="#222" stroke-width="0.07" >GGA</text>
<text x="530.00" y="285.50" font-family='"Liberation Sans", sans-serif' font-size="6.9" fill="#1a1a1a" textLength="29.30" lengthAdjust="spacingAndGlyphs" stroke="#1a1a1a" stroke-width="0.07" >Altitude (m)</text>
<text x="578.80" y="285.50" font-family='"Liberation Sans", sans-serif' font-size="6.9" fill="#1a1a1a" textLength="19.20" lengthAdjust="spacingAndGlyphs" stroke="#1a1a1a" stroke-width="0.07" >35.400</text>
<line x1="503.40" y1="297.07" x2="733.20" y2="297.07" stroke="#d2cebc" stroke-width="0.7" />
<text x="505.60" y="294.87" font-family='"Liberation Sans", sans-serif' font-size="6.9" fill="#222" textLength="13.40" lengthAdjust="spacingAndGlyphs" stroke="#222" stroke-width="0.07" >RMC</text>
<text x="530.00" y="294.87" font-family='"Liberation Sans", sans-serif' font-size="6.9" fill="#1a1a1a" textLength="26.80" lengthAdjust="spacingAndGlyphs" stroke="#1a1a1a" stroke-width="0.07" >UTC Date</text>
<text x="578.80" y="294.87" font-family='"Liberation Sans", sans-serif' font-size="6.9" fill="#1a1a1a" textLength="31.40" lengthAdjust="spacingAndGlyphs" stroke="#1a1a1a" stroke-width="0.07" >2017-07-10</text>
<line x1="503.40" y1="306.44" x2="733.20" y2="306.44" stroke="#d2cebc" stroke-width="0.7" />
<text x="505.60" y="304.24" font-family='"Liberation Sans", sans-serif' font-size="6.9" fill="#222" textLength="13.40" lengthAdjust="spacingAndGlyphs" stroke="#222" stroke-width="0.07" >GGA</text>
<text x="530.00" y="304.24" font-family='"Liberation Sans", sans-serif' font-size="6.9" fill="#1a1a1a" textLength="38.00" lengthAdjust="spacingAndGlyphs" stroke="#1a1a1a" stroke-width="0.07" >DGPS Age (s)</text>
<text x="578.80" y="304.24" font-family='"Liberation Sans", sans-serif' font-size="6.9" fill="#1a1a1a" textLength="8.80" lengthAdjust="spacingAndGlyphs" stroke="#1a1a1a" stroke-width="0.07" >0.0</text>
<line x1="503.40" y1="315.81" x2="733.20" y2="315.81" stroke="#d2cebc" stroke-width="0.7" />
<text x="505.60" y="313.61" font-family='"Liberation Sans", sans-serif' font-size="6.9" fill="#222" textLength="13.40" lengthAdjust="spacingAndGlyphs" stroke="#222" stroke-width="0.07" >GGA</text>
<text x="530.00" y="313.61" font-family='"Liberation Sans", sans-serif' font-size="6.9" fill="#1a1a1a" textLength="24.30" lengthAdjust="spacingAndGlyphs" stroke="#1a1a1a" stroke-width="0.07" >DGPS ID</text>
<text x="578.80" y="313.61" font-family='"Liberation Sans", sans-serif' font-size="6.9" fill="#1a1a1a" textLength="3.50" lengthAdjust="spacingAndGlyphs" stroke="#1a1a1a" stroke-width="0.07" >0</text>
<line x1="503.40" y1="325.19" x2="733.20" y2="325.19" stroke="#d2cebc" stroke-width="0.7" />
<text x="505.60" y="322.98" font-family='"Liberation Sans", sans-serif' font-size="6.9" fill="#222" textLength="13.40" lengthAdjust="spacingAndGlyphs" stroke="#222" stroke-width="0.07" >GSV</text>
<text x="530.00" y="322.98" font-family='"Liberation Sans", sans-serif' font-size="6.9" fill="#1a1a1a" textLength="29.80" lengthAdjust="spacingAndGlyphs" stroke="#1a1a1a" stroke-width="0.07" >Sat in View</text>
<text x="578.80" y="322.98" font-family='"Liberation Sans", sans-serif' font-size="6.9" fill="#1a1a1a" textLength="7.00" lengthAdjust="spacingAndGlyphs" stroke="#1a1a1a" stroke-width="0.07" >19</text>
<line x1="503.40" y1="334.56" x2="733.20" y2="334.56" stroke="#d2cebc" stroke-width="0.7" />
<text x="505.60" y="332.35" font-family='"Liberation Sans", sans-serif' font-size="6.9" fill="#222" textLength="13.40" lengthAdjust="spacingAndGlyphs" stroke="#222" stroke-width="0.07" >GGA</text>
<text x="530.00" y="332.35" font-family='"Liberation Sans", sans-serif' font-size="6.9" fill="#1a1a1a" textLength="44.00" lengthAdjust="spacingAndGlyphs" stroke="#1a1a1a" stroke-width="0.07" >Geoid Offset (m)</text>
<text x="578.80" y="332.35" font-family='"Liberation Sans", sans-serif' font-size="6.9" fill="#1a1a1a" textLength="18.00" lengthAdjust="spacingAndGlyphs" stroke="#1a1a1a" stroke-width="0.07" >-2.800</text>
<line x1="503.40" y1="343.93" x2="733.20" y2="343.93" stroke="#d2cebc" stroke-width="0.7" />
<text x="505.60" y="341.72" font-family='"Liberation Sans", sans-serif' font-size="6.9" fill="#222" textLength="13.40" lengthAdjust="spacingAndGlyphs" stroke="#222" stroke-width="0.07" >GSA</text>
<text x="530.00" y="341.72" font-family='"Liberation Sans", sans-serif' font-size="6.9" fill="#1a1a1a" textLength="24.60" lengthAdjust="spacingAndGlyphs" stroke="#1a1a1a" stroke-width="0.07" >Op Mode</text>
<text x="578.80" y="341.72" font-family='"Liberation Sans", sans-serif' font-size="6.9" fill="#1a1a1a" textLength="32.70" lengthAdjust="spacingAndGlyphs" stroke="#1a1a1a" stroke-width="0.07" >Auto 2D/3D</text>
<line x1="503.40" y1="353.30" x2="733.20" y2="353.30" stroke="#d2cebc" stroke-width="0.7" />
<text x="505.60" y="351.09" font-family='"Liberation Sans", sans-serif' font-size="6.9" fill="#222" textLength="13.40" lengthAdjust="spacingAndGlyphs" stroke="#222" stroke-width="0.07" >GSA</text>
<text x="530.00" y="351.09" font-family='"Liberation Sans", sans-serif' font-size="6.9" fill="#1a1a1a" textLength="32.30" lengthAdjust="spacingAndGlyphs" stroke="#1a1a1a" stroke-width="0.07" >Fixing Mode</text>
<text x="578.80" y="351.09" font-family='"Liberation Sans", sans-serif' font-size="6.9" fill="#1a1a1a" textLength="6.80" lengthAdjust="spacingAndGlyphs" stroke="#1a1a1a" stroke-width="0.07" >3D</text>
<line x1="503.40" y1="362.67" x2="733.20" y2="362.67" stroke="#d2cebc" stroke-width="0.7" />
<text x="505.60" y="360.46" font-family='"Liberation Sans", sans-serif' font-size="6.9" fill="#222" textLength="13.40" lengthAdjust="spacingAndGlyphs" stroke="#222" stroke-width="0.07" >GSA</text>
<text x="530.00" y="360.46" font-family='"Liberation Sans", sans-serif' font-size="6.9" fill="#1a1a1a" textLength="29.70" lengthAdjust="spacingAndGlyphs" stroke="#1a1a1a" stroke-width="0.07" >SV in Used</text>
<text x="578.80" y="360.46" font-family='"Liberation Sans", sans-serif' font-size="6.9" fill="#1a1a1a" textLength="151.40" lengthAdjust="spacingAndGlyphs" stroke="#1a1a1a" stroke-width="0.07" >05 02 G17 G9 G12 G19 G28 B5 B8 B9 B13 B7 B8 B4</text>
<line x1="503.40" y1="372.04" x2="733.20" y2="372.04" stroke="#d2cebc" stroke-width="0.7" />
<text x="505.60" y="369.83" font-family='"Liberation Sans", sans-serif' font-size="6.9" fill="#222" textLength="13.40" lengthAdjust="spacingAndGlyphs" stroke="#222" stroke-width="0.07" >GSA</text>
<text x="530.00" y="369.83" font-family='"Liberation Sans", sans-serif' font-size="6.9" fill="#1a1a1a" textLength="17.50" lengthAdjust="spacingAndGlyphs" stroke="#1a1a1a" stroke-width="0.07" >PDOP</text>
<text x="578.80" y="369.83" font-family='"Liberation Sans", sans-serif' font-size="6.9" fill="#1a1a1a" textLength="16.00" lengthAdjust="spacingAndGlyphs" stroke="#1a1a1a" stroke-width="0.07" >1.350</text>
<line x1="527.50" y1="221.80" x2="527.50" y2="366.00" stroke="#d2cebc" stroke-width="0.7" />
<line x1="577.50" y1="221.80" x2="577.50" y2="366.00" stroke="#d2cebc" stroke-width="0.7" />
</g>
<rect x="733.40" y="221.80" width="9.20" height="144.00" fill="#fcfcf8" />
<rect x="733.90" y="222.40" width="8.20" height="9.60" fill="#c3d3fc" stroke="#fff" stroke-width="0.4" rx="1" />
<path d="M735.8 228.4 L738 226 L740.2 228.4" stroke="#4d6185" stroke-width="1.3" fill="none"/>
<rect x="733.90" y="233.00" width="8.20" height="8.60" fill="#c6d5fd" stroke="#fff" stroke-width="0.4" rx="1" />
<line x1="736.00" y1="236.40" x2="740.00" y2="236.40" stroke="#eef2ff" stroke-width="0.6" />
<line x1="736.00" y1="238.20" x2="740.00" y2="238.20" stroke="#eef2ff" stroke-width="0.6" />
<rect x="733.90" y="355.00" width="8.20" height="9.60" fill="#c3d3fc" stroke="#fff" stroke-width="0.4" rx="1" />
<path d="M735.8 358.6 L738 361 L740.2 358.6" stroke="#4d6185" stroke-width="1.3" fill="none"/>
<rect x="503.40" y="365.60" width="229.80" height="9.80" fill="#fcfcf8" />
<rect x="733.20" y="366.00" width="9.60" height="9.20" fill="#ece9d8" />
<rect x="504.80" y="366.40" width="8.40" height="8.40" fill="#c3d3fc" stroke="#fff" stroke-width="0.4" rx="1" />
<path d="M510 368.4 L507.8 370.6 L510 372.8" stroke="#4d6185" stroke-width="1.3" fill="none"/>
<rect x="515.00" y="366.40" width="8.40" height="8.40" fill="#c6d5fd" stroke="#fff" stroke-width="0.4" rx="1" />
<rect x="723.80" y="366.40" width="8.40" height="8.40" fill="#c3d3fc" stroke="#fff" stroke-width="0.4" rx="1" />
<path d="M727 368.4 L729.2 370.6 L727 372.8" stroke="#4d6185" stroke-width="1.3" fill="none"/>
<rect x="2.30" y="380.10" width="744.90" height="18.20" fill="#ece9d8" />
<line x1="2.30" y1="380.80" x2="747.20" y2="380.80" stroke="#fbfaf6" stroke-width="0.9" />
<rect x="2.80" y="382.80" width="40.50" height="15.40" fill="#ffffff" stroke="#a4a194" stroke-width="0.6" />
<line x1="2.60" y1="382.90" x2="43.40" y2="382.90" stroke="#5f5d55" stroke-width="0.8" />
<line x1="2.90" y1="382.80" x2="2.90" y2="398.00" stroke="#5f5d55" stroke-width="0.7" />
<text x="22.70" y="392.30" font-family='"Liberation Sans", sans-serif' font-size="6.4" fill="#111" text-anchor="middle" stroke="#111" stroke-width="0.07" >0%</text>
<rect x="43.60" y="383.00" width="81.40" height="15.00" fill="#f2f1e8" />
<rect x="43.80" y="383.20" width="9.00" height="14.80" fill="#eceadf" />
<rect x="118.80" y="383.20" width="6.20" height="14.80" fill="#eceadf" />
<line x1="53.30" y1="382.60" x2="53.30" y2="398.00" stroke="#5a584f" stroke-width="0.9" />
<path d="M49 388.6 L47.2 390.4 L49 392.2 Z" fill="#a19e90"/>
<path d="M120 388.6 L121.8 390.4 L120 392.2 Z" fill="#a19e90"/>
<clipPath id="cb1"><rect x="189" y="383" width="16.4" height="15"/></clipPath>
<clipPath id="cb2"><rect x="241" y="383" width="27.2" height="15"/></clipPath>
<rect x="126.00" y="384.00" width="40.00" height="14.20" fill="#ffffff" stroke="#a4a194" stroke-width="0.7" />
<line x1="126.00" y1="384.20" x2="166.00" y2="384.20" stroke="#6c6a60" stroke-width="0.8" />
<line x1="126.20" y1="384.00" x2="126.20" y2="398.00" stroke="#77746a" stroke-width="0.7" />
<rect x="157.40" y="385.00" width="8.20" height="13.00" fill="#f1efe6" />
<path d="M159.6 392.4 H163.4 L161.5 394.4 Z" fill="#b1ae9f"/>
<text x="128.30" y="392.25" font-family='"Liberation Sans", sans-serif' font-size="6.8" fill="#222" textLength="13.70" lengthAdjust="spacingAndGlyphs" stroke="#222" stroke-width="0.07" >COM</text>
<rect x="170.00" y="382.90" width="17.30" height="15.10" fill="#efede1" stroke="#dcd9c9" stroke-width="0.6" />
<line x1="170.00" y1="383.10" x2="187.30" y2="383.10" stroke="#f8f7f1" stroke-width="0.6" />
<text x="178.65" y="392.86" font-family='"Liberation Serif", serif' font-size="7.4" fill="#111" text-anchor="middle" font-weight="bold" textLength="12.30" lengthAdjust="spacingAndGlyphs" stroke="#111" stroke-width="0.07" >Port</text>
<rect x="188.20" y="384.00" width="24.40" height="14.20" fill="#ffffff" stroke="#a4a194" stroke-width="0.7" />
<line x1="188.20" y1="384.20" x2="212.60" y2="384.20" stroke="#6c6a60" stroke-width="0.8" />
<line x1="188.40" y1="384.00" x2="188.40" y2="398.00" stroke="#77746a" stroke-width="0.7" />
<rect x="204.00" y="385.00" width="8.20" height="13.00" fill="#f1efe6" />
<path d="M206.2 392.4 H210.0 L208.1 394.4 Z" fill="#b1ae9f"/>
<g clip-path="url(#cb1)">
<text x="191.30" y="393.11" font-family='"Liberation Serif", serif' font-size="9.2" fill="#222" textLength="8.80" lengthAdjust="spacingAndGlyphs" stroke="#222" stroke-width="0.07" >15</text>
</g>
<rect x="215.40" y="382.90" width="23.20" height="15.10" fill="#efede1" stroke="#dcd9c9" stroke-width="0.6" />
<line x1="215.40" y1="383.10" x2="238.60" y2="383.10" stroke="#f8f7f1" stroke-width="0.6" />
<text x="227.00" y="392.86" font-family='"Liberation Serif", serif' font-size="7.4" fill="#111" text-anchor="middle" font-weight="bold" textLength="14.40" lengthAdjust="spacingAndGlyphs" stroke="#111" stroke-width="0.07" >Baud</text>
<rect x="240.60" y="384.00" width="36.80" height="14.20" fill="#ffffff" stroke="#a4a194" stroke-width="0.7" />
<line x1="240.60" y1="384.20" x2="277.40" y2="384.20" stroke="#6c6a60" stroke-width="0.8" />
<line x1="240.80" y1="384.00" x2="240.80" y2="398.00" stroke="#77746a" stroke-width="0.7" />
<rect x="268.80" y="385.00" width="8.20" height="13.00" fill="#f1efe6" />
<path d="M271.0 392.4 H274.8 L272.9 394.4 Z" fill="#b1ae9f"/>
<g clip-path="url(#cb2)">
<text x="242.70" y="393.11" font-family='"Liberation Serif", serif' font-size="9.2" fill="#222" textLength="28.60" lengthAdjust="spacingAndGlyphs" stroke="#222" stroke-width="0.07" >115200</text>
</g>
<rect x="280.80" y="382.90" width="20.60" height="15.10" fill="#efede1" stroke="#dcd9c9" stroke-width="0.6" />
<line x1="280.80" y1="383.10" x2="301.40" y2="383.10" stroke="#f8f7f1" stroke-width="0.6" />
<text x="291.10" y="392.86" font-family='"Liberation Serif", serif' font-size="7.4" fill="#111" text-anchor="middle" font-weight="bold" textLength="14.60" lengthAdjust="spacingAndGlyphs" stroke="#111" stroke-width="0.07" >Week</text>
<rect x="304.00" y="382.90" width="19.40" height="15.10" fill="#efede1" stroke="#dcd9c9" stroke-width="0.6" />
<line x1="304.00" y1="383.40" x2="304.00" y2="397.60" stroke="#b9b6a6" stroke-width="0.6" />
<text x="305.20" y="392.65" font-family='"Liberation Sans", sans-serif' font-size="6.8" fill="#222" textLength="12.80" lengthAdjust="spacingAndGlyphs" stroke="#222" stroke-width="0.07" >1957</text>
<rect x="325.00" y="382.90" width="18.20" height="15.10" fill="#efede1" stroke="#dcd9c9" stroke-width="0.6" />
<line x1="325.00" y1="383.40" x2="325.00" y2="397.60" stroke="#b9b6a6" stroke-width="0.6" />
<text x="326.00" y="392.65" font-family='"Liberation Sans", sans-serif' font-size="6.8" fill="#222" textLength="9.80" lengthAdjust="spacingAndGlyphs" stroke="#222" stroke-width="0.07" >TOW</text>
<rect x="345.20" y="382.90" width="24.80" height="15.10" fill="#efede1" stroke="#dcd9c9" stroke-width="0.6" />
<line x1="345.20" y1="383.40" x2="345.20" y2="397.60" stroke="#b9b6a6" stroke-width="0.6" />
<text x="346.40" y="392.65" font-family='"Liberation Sans", sans-serif' font-size="6.8" fill="#222" textLength="20.20" lengthAdjust="spacingAndGlyphs" stroke="#222" stroke-width="0.07" >120490</text>
<rect x="371.60" y="382.90" width="22.20" height="15.10" fill="#efede1" stroke="#dcd9c9" stroke-width="0.6" />
<line x1="371.60" y1="383.40" x2="371.60" y2="397.60" stroke="#b9b6a6" stroke-width="0.6" />
<text x="372.20" y="392.65" font-family='"Liberation Sans", sans-serif' font-size="6.8" fill="#222" textLength="9.40" lengthAdjust="spacingAndGlyphs" stroke="#222" stroke-width="0.07" >OFF</text>
<line x1="394.40" y1="382.60" x2="394.40" y2="398.00" stroke="#d2cfbe" stroke-width="0.8" />
<rect x="2.30" y="397.90" width="748.00" height="3.20" fill="#2a6ee0" />
<rect x="2.30" y="397.90" width="54.00" height="3.20" fill="#3f9a45" />
<rect x="640.60" y="397.90" width="109.40" height="3.20" fill="#1aa0e6" />
<line x1="56.30" y1="398.30" x2="750.00" y2="398.30" stroke="#5d9af0" stroke-width="0.8" /></g></svg>
</body></html>
